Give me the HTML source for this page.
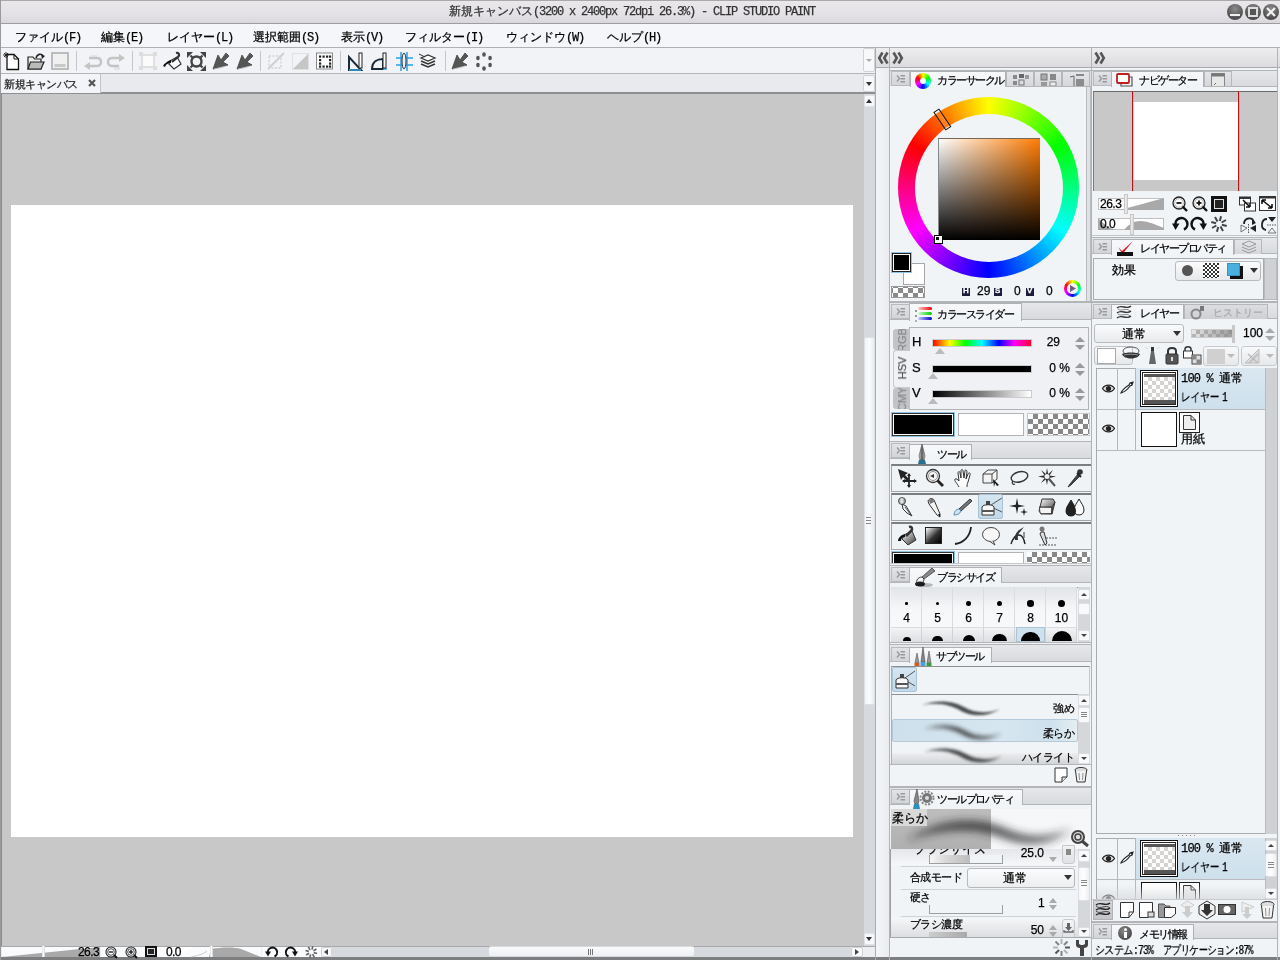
<!DOCTYPE html>
<html><head><meta charset="utf-8">
<style>
*{box-sizing:border-box}
html,body{margin:0;padding:0;width:1280px;height:960px;overflow:hidden;background:#f0f4f7;font-family:"Liberation Sans",sans-serif;font-size:12px;color:#000}
.a{position:absolute}
.m{font-family:"Liberation Mono",monospace;letter-spacing:-1.2px}
.t{white-space:nowrap;line-height:14px;will-change:transform;-webkit-text-stroke:0.25px currentColor}
svg{position:absolute;overflow:visible}
</style></head><body>
<div class="a" style="left:0px;top:0px;width:1280px;height:24px;background:linear-gradient(#e9e7ea,#e4e2e6 60%,#d9d7db);border-top:1px solid #a9a8ab;border-bottom:1px solid #9d9d9f"></div>
<div class="a t" style="left:449px;top:4px;color:#333">新規キャンバス<span class="m">(3200 x 2400px 72dpi 26.3%) - CLIP STUDIO PAINT</span></div>
<div class="a" style="left:1227px;top:4px;width:16px;height:16px;border-radius:50%;background:radial-gradient(circle at 50% 30%,#8c8c8c,#4a4a4a 75%,#555)"></div>
<div class="a" style="left:1245px;top:4px;width:16px;height:16px;border-radius:50%;background:radial-gradient(circle at 50% 30%,#8c8c8c,#4a4a4a 75%,#555)"></div>
<div class="a" style="left:1263px;top:4px;width:16px;height:16px;border-radius:50%;background:radial-gradient(circle at 50% 30%,#8c8c8c,#4a4a4a 75%,#555)"></div>
<div class="a" style="left:1230px;top:14px;width:10px;height:2px;background:#eee"></div>
<div class="a" style="left:1248px;top:7px;width:10px;height:10px;border:2px solid #ddd;background:#555"></div>
<svg style="left:1266px;top:7px;" width="10" height="10" viewBox="0 0 10 10"><path d="M1 1 L9 9 M9 1 L1 9" stroke="#f2f2f2" stroke-width="2.2"/></svg>
<div class="a" style="left:0px;top:24px;width:1280px;height:24px;background:#f4f6f9;border-bottom:1px solid #aeb0b3"></div>
<div class="a t" style="left:15px;top:30px;">ファイル<span class="m">(F)</span></div>
<div class="a t" style="left:101px;top:30px;">編集<span class="m">(E)</span></div>
<div class="a t" style="left:167px;top:30px;">レイヤー<span class="m">(L)</span></div>
<div class="a t" style="left:253px;top:30px;">選択範囲<span class="m">(S)</span></div>
<div class="a t" style="left:341px;top:30px;">表示<span class="m">(V)</span></div>
<div class="a t" style="left:405px;top:30px;">フィルター<span class="m">(I)</span></div>
<div class="a t" style="left:506px;top:30px;">ウィンドウ<span class="m">(W)</span></div>
<div class="a t" style="left:607px;top:30px;">ヘルプ<span class="m">(H)</span></div>
<div class="a" style="left:0px;top:48px;width:876px;height:26px;background:#f1f3f6;border-bottom:1px solid #b4b6b9"></div>
<div class="a" style="left:863px;top:48px;width:12px;height:24px;background:#f7f8fa;border:1px solid #d0d2d5;border-radius:2px"></div>
<div class="a" style="left:866px;top:59px;width:0;height:0;border-left:3.0px solid transparent;border-right:3.0px solid transparent;border-top:3px solid #aaa"></div>
<div class="a" style="left:76px;top:51px;width:1px;height:20px;background:#c4c6c9"></div>
<div class="a" style="left:132px;top:51px;width:1px;height:20px;background:#c4c6c9"></div>
<div class="a" style="left:260px;top:51px;width:1px;height:20px;background:#c4c6c9"></div>
<div class="a" style="left:340px;top:51px;width:1px;height:20px;background:#c4c6c9"></div>
<div class="a" style="left:445px;top:51px;width:1px;height:20px;background:#c4c6c9"></div>
<svg style="left:3px;top:52px;" width="17" height="19" viewBox="0 0 17 19"><path d="M4 2.5 L11 2.5 L15.5 7 L15.5 17.5 L4 17.5Z" fill="#fff" stroke="#111" stroke-width="1.3"/><path d="M11 2.5 L11 7 L15.5 7" fill="none" stroke="#111" stroke-width="1"/><path d="M3 0 L3 6 M0 3 L6 3 M1 1 L5 5 M5 1 L1 5" stroke="#222" stroke-width="0.9"/></svg>
<svg style="left:27px;top:53px;" width="19" height="17" viewBox="0 0 19 17"><path d="M1 4 L6 4 L7.5 6 L14 6 L14 16 L1 16Z" fill="#eee" stroke="#222" stroke-width="1.2"/><path d="M1 16 L3.5 9 L17 9 L14 16Z" fill="#bbb" stroke="#222" stroke-width="1.2"/><path d="M9 5 C10 1 14 0 16 3" fill="none" stroke="#222" stroke-width="1.6"/><path d="M14 1 L18 3 L15 6Z" fill="#222"/></svg>
<svg style="left:51px;top:52px;" width="18" height="18" viewBox="0 0 18 18"><rect x="1" y="1" width="16" height="16" fill="#f0f0f0" stroke="#bcbcbc" stroke-width="2"/><rect x="3.5" y="12" width="11" height="3" fill="#c8c8c8"/></svg>
<svg style="left:83px;top:54px;" width="19" height="14" viewBox="0 0 19 14"><path d="M6 4 L14 4 C17 4 18 6 18 8 C18 10 17 12 14 12 L7 12" fill="none" stroke="#c4c4c4" stroke-width="2.4"/><path d="M1 12 L7 8 L7 16Z" fill="#c4c4c4"/><path d="M9 1 L9 3 M11 1 L11 3 M13 1 L13 3" stroke="#d4d4d4"/></svg>
<svg style="left:107px;top:54px;" width="19" height="14" viewBox="0 0 19 14"><path d="M13 4 L5 4 C2 4 1 6 1 8 C1 10 2 12 5 12 L12 12" fill="none" stroke="#c4c4c4" stroke-width="2.4"/><path d="M18 4 L12 0 L12 8Z" fill="#c4c4c4"/><path d="M8 13 L8 16 M10 13 L10 16 M12 13 L12 16" stroke="#d4d4d4"/></svg>
<svg style="left:139px;top:52px;" width="18" height="18" viewBox="0 0 18 18"><rect x="3" y="3" width="12" height="12" fill="#fbfbfb" stroke="#d8d8d8" stroke-width="1.5"/><rect x="0" y="0" width="4" height="4" fill="#ddd"/><rect x="14" y="0" width="4" height="4" fill="#ddd"/><rect x="0" y="14" width="4" height="4" fill="#ddd"/><rect x="14" y="14" width="4" height="4" fill="#ddd"/></svg>
<svg style="left:163px;top:52px;" width="19" height="18" viewBox="0 0 19 18"><path d="M7 9 L14 5 L18 12 L11 17 L6 12Z" fill="#fff" stroke="#333" stroke-width="1.2"/><path d="M13 1 C16 0 17 3 15 5 L9 10" stroke="#333" stroke-width="2.2" fill="none"/><path d="M8 8 C4 9 1 12 0 14 L2 15 C3 12 5 11 8 11Z" fill="#111"/></svg>
<svg style="left:187px;top:52px;" width="19" height="19" viewBox="0 0 19 19"><path d="M3.5 3.5 L15.5 15.5 M15.5 3.5 L3.5 15.5" stroke="#444" stroke-width="2.2"/><circle cx="9.5" cy="9.5" r="5" fill="#f1f3f6" stroke="#444" stroke-width="2.4"/><path d="M0 0 L6 0 L0 6Z M19 0 L13 0 L19 6Z M0 19 L6 19 L0 13Z M19 19 L13 19 L19 13Z" fill="#444"/></svg>
<svg style="left:212px;top:52px;" width="17" height="18" viewBox="0 0 17 18"><path d="M1 17 L6 3 L9 8 L14 1 L17 4 L11 10 L16 13Z" fill="#555" stroke="#444" stroke-width="0.8"/><path d="M2 17 C7 16 11 15 14 14" stroke="#bbb" stroke-width="1" fill="none"/></svg>
<svg style="left:236px;top:52px;" width="17" height="18" viewBox="0 0 17 18"><path d="M1 17 L6 3 L9 8 L14 1 L17 4 L11 10 L16 13Z" fill="#555" stroke="#444" stroke-width="0.8"/><path d="M2 17 C7 16 11 15 14 14" stroke="#bbb" stroke-width="1" fill="none"/></svg>
<svg style="left:451px;top:52px;" width="17" height="18" viewBox="0 0 17 18"><path d="M1 17 L6 3 L9 8 L14 1 L17 4 L11 10 L16 13Z" fill="#555" stroke="#444" stroke-width="0.8"/><path d="M2 17 C7 16 11 15 14 14" stroke="#bbb" stroke-width="1" fill="none"/></svg>
<svg style="left:268px;top:53px;" width="16" height="17" viewBox="0 0 16 17"><rect x="1" y="3" width="12" height="12" fill="none" stroke="#d0d0d0" stroke-width="1.3" stroke-dasharray="2 1.5"/><path d="M0 16 L16 0" stroke="#cfcfcf" stroke-width="2"/></svg>
<svg style="left:292px;top:53px;" width="17" height="17" viewBox="0 0 17 17"><path d="M1 16 L16 1 L16 16Z" fill="#c6c6c6"/><rect x="0.5" y="0.5" width="16" height="16" fill="none" stroke="#e0e0e0"/></svg>
<svg style="left:316px;top:52px;" width="17" height="18" viewBox="0 0 17 18"><rect x="0.5" y="1" width="16" height="16" fill="#fff" stroke="#888"/><rect x="3" y="3.5" width="2.2" height="2.2" fill="#222"/><rect x="6.5" y="3.5" width="2.2" height="2.2" fill="#222"/><rect x="10" y="3.5" width="2.2" height="2.2" fill="#222"/><rect x="13" y="3.5" width="2.2" height="2.2" fill="#222"/><rect x="3" y="7" width="2.2" height="2.2" fill="#222"/><rect x="13" y="7" width="2.2" height="2.2" fill="#222"/><rect x="3" y="10.5" width="2.2" height="2.2" fill="#222"/><rect x="13" y="10.5" width="2.2" height="2.2" fill="#222"/><rect x="3" y="13.5" width="2.2" height="2.2" fill="#222"/><rect x="6.5" y="13.5" width="2.2" height="2.2" fill="#222"/><rect x="10" y="13.5" width="2.2" height="2.2" fill="#222"/><rect x="13" y="13.5" width="2.2" height="2.2" fill="#222"/></svg>
<svg style="left:348px;top:52px;" width="15" height="19" viewBox="0 0 15 19"><path d="M1 18 L1 5 L13 18Z" fill="none" stroke="#1a2a3a" stroke-width="2"/><path d="M1 18 L13 18" stroke="#3aa8e0" stroke-width="1.5"/><rect x="11" y="1" width="3" height="15" fill="#fff" stroke="#222"/></svg>
<svg style="left:371px;top:52px;" width="17" height="19" viewBox="0 0 17 19"><path d="M1 17 C1 10 6 7 12 7 L12 17Z" fill="none" stroke="#1a2a3a" stroke-width="2"/><path d="M12 17 L16 17" stroke="#3aa8e0" stroke-width="1.6"/><rect x="12" y="1" width="3" height="15" fill="#fff" stroke="#222"/></svg>
<svg style="left:396px;top:52px;" width="17" height="19" viewBox="0 0 17 19"><path d="M0 6 L17 6 M0 13 L17 13 M5 0 L5 19 M11 0 L11 19" stroke="#2aa0e8" stroke-width="1.5"/><ellipse cx="8" cy="9" rx="2" ry="8" fill="#eee" stroke="#333"/></svg>
<svg style="left:419px;top:53px;" width="18" height="16" viewBox="0 0 18 16"><path d="M2 5 L9 2 L16 5 L9 8Z" fill="#fff" stroke="#333" stroke-width="1.2"/><path d="M2 8 L9 11 L16 8 M2 11 L9 14 L16 11" fill="none" stroke="#333" stroke-width="1.5"/><path d="M0 1 L6 4" stroke="#333" stroke-width="1"/></svg>
<svg style="left:475px;top:52px;" width="18" height="19" viewBox="0 0 18 19"><g fill="#555"><ellipse cx="9.0" cy="2.5" rx="1.8" ry="2.2"/><ellipse cx="15.06217782649107" cy="5.999999999999999" rx="1.8" ry="2.2"/><ellipse cx="15.062177826491071" cy="12.999999999999998" rx="1.8" ry="2.2"/><ellipse cx="9.0" cy="16.5" rx="1.8" ry="2.2"/><ellipse cx="2.9378221735089314" cy="13.000000000000004" rx="1.8" ry="2.2"/><ellipse cx="2.9378221735089296" cy="5.999999999999999" rx="1.8" ry="2.2"/></g></svg>
<div class="a" style="left:0px;top:74px;width:876px;height:20px;background:#e9eaee;border-bottom:2px solid #8e8f92"></div>
<div class="a" style="left:1px;top:74px;width:100px;height:19px;background:#f2f4f7;border-right:1px solid #c2c4c7"></div>
<div class="a t" style="left:4px;top:77px;color:#222;font-size:11px;letter-spacing:-0.5px">新規キャンバス</div>
<svg style="left:88px;top:79px;" width="8" height="8" viewBox="0 0 8 8"><path d="M1 1 L7 7 M7 1 L1 7" stroke="#555" stroke-width="2.2"/></svg>
<div class="a" style="left:863px;top:75px;width:12px;height:17px;background:#f7f8fa;border:1px solid #d0d2d5;border-radius:2px"></div>
<div class="a" style="left:866px;top:82px;width:0;height:0;border-left:3.0px solid transparent;border-right:3.0px solid transparent;border-top:4px solid #333"></div>
<div class="a" style="left:0px;top:94px;width:864px;height:853px;background:#c8c8c8"></div>
<div class="a" style="left:0px;top:94px;width:2px;height:866px;background:#8c8c8c"></div>
<div class="a" style="left:11px;top:205px;width:842px;height:632px;background:#fff"></div>
<div class="a" style="left:864px;top:94px;width:11px;height:853px;background:#d6d9dd"></div>
<div class="a" style="left:864px;top:95px;width:11px;height:12px;background:#f7f8fa;border:1px solid #e0e2e5;border-radius:2px"></div>
<div class="a" style="left:866px;top:99px;width:0;height:0;border-left:3.0px solid transparent;border-right:3.0px solid transparent;border-bottom:4px solid #333"></div>
<div class="a" style="left:864px;top:337px;width:11px;height:368px;background:linear-gradient(90deg,#f1f4f7,#fbfcfd 50%,#e8ebee);border:1px solid #dfe2e5;border-radius:2px"></div>
<div class="a" style="left:866px;top:517px;width:5px;height:7px;border-top:1px solid #888;border-bottom:1px solid #888"></div>
<div class="a" style="left:866px;top:520px;width:5px;height:1px;background:#888"></div>
<div class="a" style="left:864px;top:933px;width:11px;height:12px;background:#f7f8fa;border:1px solid #e0e2e5;border-radius:2px"></div>
<div class="a" style="left:866px;top:937px;width:0;height:0;border-left:3.0px solid transparent;border-right:3.0px solid transparent;border-top:4px solid #333"></div>
<div class="a" style="left:0px;top:946px;width:876px;height:11px;background:#eceef1;border-top:1px solid #a6a8ab"></div>
<div class="a" style="left:0px;top:957px;width:1280px;height:3px;background:#7d7e80"></div>
<div class="a" style="left:2px;top:947px;width:98px;height:10px;background:#fafbfc"></div>
<svg style="left:2px;top:947px;" width="98" height="10" viewBox="0 0 98 10"><path d="M0 10 L98 0 L98 10Z" fill="#a9a9a9"/></svg>
<div class="a" style="left:42px;top:946px;width:3px;height:11px;background:linear-gradient(90deg,#ddd,#fafafa,#ccc)"></div>
<div class="a t" style="left:60px;top:945px;width:39px;text-align:right;font-size:12px;letter-spacing:-0.6px;line-height:14px">26.3</div>
<div class="a" style="left:101px;top:947px;width:60px;height:10px;background:#fafbfc"></div>
<svg style="left:105px;top:946px;" width="13" height="13" viewBox="0 0 13 13"><circle cx="6" cy="6" r="5" fill="#fff" stroke="#222" stroke-width="1.1"/><circle cx="6" cy="6" r="3.3" fill="none" stroke="#222" stroke-width="0.8"/><path d="M9 9 L12 12" stroke="#111" stroke-width="2"/><path d="M4 6 L8 6" stroke="#111" stroke-width="1.3"/></svg>
<svg style="left:125px;top:946px;" width="13" height="13" viewBox="0 0 13 13"><circle cx="6" cy="6" r="5" fill="#fff" stroke="#222" stroke-width="1.1"/><circle cx="6" cy="6" r="3.3" fill="none" stroke="#222" stroke-width="0.8"/><path d="M9 9 L12 12" stroke="#111" stroke-width="2"/><path d="M4 6 L8 6" stroke="#111" stroke-width="1.3"/><path d="M6 4 L6 8" stroke="#111" stroke-width="1.3"/></svg>
<div class="a" style="left:145px;top:946px;width:12px;height:11px;background:#222;border:2px solid #111"></div>
<div class="a" style="left:147px;top:948px;width:8px;height:7px;border:1px solid #ddd"></div>
<div class="a" style="left:161px;top:947px;width:100px;height:10px;background:#fafbfc;border-left:1px solid #ccc"></div>
<svg style="left:161px;top:947px;" width="100" height="10" viewBox="0 0 100 10"><path d="M0 10 C10 10 20 6 32 0 L0 0Z" fill="#fff"/><path d="M48 10 L50 2 C60 0 75 0 80 2 L100 10Z" fill="#a9a9a9"/><path d="M30 10 C40 8 44 6 46 4" stroke="#ccc" fill="none"/></svg>
<div class="a" style="left:210px;top:946px;width:3px;height:11px;background:linear-gradient(90deg,#ddd,#fafafa,#ccc)"></div>
<div class="a t" style="left:166px;top:945px;font-size:12px;letter-spacing:-0.6px">0.0</div>
<div class="a" style="left:262px;top:947px;width:60px;height:10px;background:#fafbfc"></div>
<svg style="left:265px;top:946px;" width="13" height="12" viewBox="0 0 13 12"><path d="M2.8 7 A4.7 4.7 0 1 1 9.5 10.5" fill="none" stroke="#111" stroke-width="2"/><path d="M0 5.5 L6 5.5 L3 10.5Z" fill="#111"/></svg>
<svg style="left:285px;top:946px;" width="13" height="12" viewBox="0 0 13 12"><path d="M10.2 7 A4.7 4.7 0 1 0 3.5 10.5" fill="none" stroke="#111" stroke-width="2"/><path d="M13 5.5 L7 5.5 L10 10.5Z" fill="#111"/></svg>
<svg style="left:305px;top:946px;" width="13" height="12" viewBox="0 0 13 12"><g fill="#666"><rect x="5.5" y="0" width="1.6" height="3.5" transform="rotate(15 6.3 6)"/><rect x="5.5" y="0" width="1.6" height="3.5" transform="rotate(60 6.3 6)"/><rect x="5.5" y="0" width="1.6" height="3.5" transform="rotate(105 6.3 6)"/><rect x="5.5" y="0" width="1.6" height="3.5" transform="rotate(150 6.3 6)"/><rect x="5.5" y="0" width="1.6" height="3.5" transform="rotate(195 6.3 6)"/><rect x="5.5" y="0" width="1.6" height="3.5" transform="rotate(240 6.3 6)"/><rect x="5.5" y="0" width="1.6" height="3.5" transform="rotate(285 6.3 6)"/><rect x="5.5" y="0" width="1.6" height="3.5" transform="rotate(330 6.3 6)"/></g></svg>
<div class="a" style="left:321px;top:947px;width:11px;height:10px;background:#f8f9fa;border:1px solid #d0d2d5;border-radius:2px"></div>
<svg style="left:324px;top:949px;" width="5" height="6" viewBox="0 0 5 6"><path d="M4 0 L0 3 L4 6Z" fill="#444"/></svg>
<div class="a" style="left:332px;top:947px;width:519px;height:10px;background:#d6d9dd"></div>
<div class="a" style="left:488px;top:946px;width:207px;height:11px;background:linear-gradient(#fafbfc,#eef0f3);border:1px solid #d8dadd;border-radius:3px"></div>
<div class="a" style="left:588px;top:949px;width:1px;height:6px;background:#777"></div>
<div class="a" style="left:590px;top:949px;width:1px;height:6px;background:#777"></div>
<div class="a" style="left:592px;top:949px;width:1px;height:6px;background:#777"></div>
<div class="a" style="left:851px;top:947px;width:12px;height:10px;background:#f8f9fa;border:1px solid #d0d2d5;border-radius:2px"></div>
<svg style="left:855px;top:949px;" width="5" height="6" viewBox="0 0 5 6"><path d="M0 0 L4 3 L0 6Z" fill="#444"/></svg>
<div class="a" style="left:863px;top:947px;width:13px;height:10px;background:#eceef1"></div>
<div class="a" style="left:875px;top:48px;width:405px;height:20px;background:linear-gradient(#ededef,#e3e3e5 60%,#dcdcde);border-bottom:1px solid #a9aaad"></div>
<div class="a" style="left:875px;top:47px;width:1px;height:913px;background:#a9abae"></div>
<div class="a" style="left:876px;top:68px;width:13px;height:889px;background:linear-gradient(90deg,#f4f5f8,#e9ebef)"></div>
<div class="a" style="left:889px;top:47px;width:1px;height:913px;background:#b1b3b6"></div>
<div class="a" style="left:1091px;top:47px;width:1px;height:913px;background:#b1b3b6"></div>
<div class="a" style="left:1277px;top:47px;width:1px;height:913px;background:#b1b3b6"></div>
<svg style="left:878px;top:52px;" width="11" height="12" viewBox="0 0 11 12"><path d="M4.5 0.5 L1.2 6 L4.5 11.5 M9.5 0.5 L6.2 6 L9.5 11.5" fill="none" stroke="#555" stroke-width="2.6"/></svg>
<svg style="left:892px;top:52px;" width="11" height="12" viewBox="0 0 11 12"><path d="M1.5 0.5 L4.8 6 L1.5 11.5 M6.5 0.5 L9.8 6 L6.5 11.5" fill="none" stroke="#555" stroke-width="2.6"/></svg>
<svg style="left:1094px;top:52px;" width="11" height="12" viewBox="0 0 11 12"><path d="M1.5 0.5 L4.8 6 L1.5 11.5 M6.5 0.5 L9.8 6 L6.5 11.5" fill="none" stroke="#555" stroke-width="2.6"/></svg>
<div class="a" style="left:890px;top:68px;width:201px;height:889px;background:#f0f4f7"></div>
<div class="a" style="left:890px;top:70px;width:201px;height:16px;background:linear-gradient(#e6e7ea,#d9dade);border-top:1px solid #b2b3b6"></div>
<div class="a" style="left:891px;top:71px;width:19px;height:15px;background:linear-gradient(#e2e3e6,#d3d4d8);border:1px solid #b9babd"></div>
<svg style="left:897px;top:74px;" width="9" height="9" viewBox="0 0 9 9"><path d="M0 1.5 L2.5 4.5 L0 7.5" fill="none" stroke="#9a9a9d" stroke-width="1.4"/><rect x="3.5" y="1" width="4.5" height="1.5" fill="#9a9a9d"/><rect x="3.5" y="4" width="4.5" height="1.5" fill="#9a9a9d"/><rect x="3.5" y="7" width="4.5" height="1.5" fill="#9a9a9d"/></svg>
<div class="a" style="left:910px;top:71px;width:96px;height:16px;background:linear-gradient(#f7f8fa,#f0f4f7);border:1px solid #b0b1b4;border-bottom:none"></div>
<div class="a" style="left:915px;top:73px;width:16px;height:16px;border-radius:50%;background:conic-gradient(from 0deg,#ff0,#0f0 60deg,#0ff 120deg,#00f 180deg,#f0f 240deg,#f00 300deg,#ff0 360deg)"></div>
<div class="a" style="left:920px;top:78px;width:6px;height:6px;border-radius:50%;background:#fff"></div>
<div class="a t" style="left:937px;top:73px;font-size:11px;color:#000;letter-spacing:-1.5px">カラーサークル</div>
<div class="a" style="left:1006px;top:71px;width:28px;height:15px;background:linear-gradient(#e4e5e8,#d6d7db);border:1px solid #b6b7ba;border-bottom:none"></div>
<div class="a" style="left:1034px;top:71px;width:28px;height:15px;background:linear-gradient(#e4e5e8,#d6d7db);border:1px solid #b6b7ba;border-bottom:none"></div>
<div class="a" style="left:1062px;top:71px;width:28px;height:15px;background:linear-gradient(#e4e5e8,#d6d7db);border:1px solid #b6b7ba;border-bottom:none"></div>
<svg style="left:1013px;top:74px;" width="16" height="12" viewBox="0 0 16 12"><rect x="0" y="1" width="4" height="4" fill="#888"/><rect x="6" y="0" width="5" height="4" fill="#666"/><rect x="12" y="1" width="4" height="4" fill="#999"/><rect x="0" y="7" width="4" height="4" fill="#888"/><rect x="6" y="6" width="5" height="5" fill="none" stroke="#777"/></svg>
<svg style="left:1041px;top:74px;" width="16" height="12" viewBox="0 0 16 12"><rect x="0" y="0" width="6" height="6" fill="#aaa" stroke="#777"/><rect x="9" y="0" width="6" height="6" fill="#888"/><rect x="0" y="8" width="6" height="4" fill="#999"/><rect x="9" y="8" width="6" height="4" fill="#eee" stroke="#888"/></svg>
<svg style="left:1068px;top:73px;" width="16" height="13" viewBox="0 0 16 13"><path d="M2 4 L6 3 L6 13" stroke="#666" fill="none"/><rect x="8" y="1" width="8" height="2" fill="#888"/><rect x="8" y="6" width="8" height="7" fill="#8c8c8c"/></svg>
<div class="a" style="left:890px;top:86px;width:201px;height:1px;background:#b4b5b8;left:1006px;width:85px"></div>
<div class="a" style="left:1086px;top:87px;width:1px;height:214px;background:#b8babd"></div>
<div class="a" style="left:1087px;top:87px;width:3px;height:214px;background:#dfe1e4"></div>
<div class="a" style="left:1090px;top:87px;width:1px;height:214px;background:#b8babd"></div>
<div class="a" style="left:898px;top:97px;width:181px;height:181px;border-radius:50%;background:conic-gradient(from 0deg,#ff0,#0f0 60deg,#0ff 120deg,#00f 180deg,#f0f 240deg,#f00 300deg,#ff0 360deg)"></div>
<div class="a" style="left:914.5px;top:113.5px;width:148px;height:148px;border-radius:50%;background:#f0f4f7"></div>
<div class="a" style="left:938px;top:138px;width:102px;height:102px;background:linear-gradient(to top,#000,rgba(0,0,0,0)),linear-gradient(to right,#fff,rgb(255,123,0));border-top:1px solid #776655;border-left:1px solid #888"></div>
<div class="a" style="left:934px;top:235px;width:9px;height:9px;background:#fff;border:1px solid #000"></div>
<div class="a" style="left:936px;top:237px;width:3px;height:3px;background:#111"></div>
<svg style="left:922px;top:100px" width="40" height="40" viewBox="0 0 40 40"><rect x="17.4" y="9" width="6" height="21" fill="rgba(255,255,255,0.12)" stroke="#111" stroke-width="1" transform="rotate(-34 20.4 19.6)"/></svg>
<div class="a" style="left:903px;top:263px;width:22px;height:22px;background:#fff;border:1px solid #a4a6a9"></div>
<div class="a" style="left:891px;top:252px;width:21px;height:21px;background:#8fc3e0"></div>
<div class="a" style="left:893px;top:254px;width:17px;height:17px;background:#000;border:1px solid #fff;outline:1px solid #222"></div>
<div class="a" style="left:891px;top:286px;width:34px;height:12px;background:conic-gradient(#8a8a8a 90deg,#fff 90deg 180deg,#8a8a8a 180deg 270deg,#fff 270deg) 1px 1px/10px 10px;border:1px solid #999"></div>
<div class="a" style="left:962px;top:288px;width:8px;height:8px;background:#1c1c3a"></div>
<div class="a t" style="left:963px;top:285px;color:#fff;font-size:8px;font-weight:bold;line-height:12px">H</div>
<div class="a" style="left:994px;top:288px;width:8px;height:8px;background:#1c1c3a"></div>
<div class="a t" style="left:995px;top:285px;color:#fff;font-size:8px;font-weight:bold;line-height:12px">S</div>
<div class="a" style="left:1026px;top:288px;width:8px;height:8px;background:#1c1c3a"></div>
<div class="a t" style="left:1027px;top:285px;color:#fff;font-size:8px;font-weight:bold;line-height:12px">V</div>
<div class="a t" style="left:977px;top:284px;font-size:12px;line-height:14px">29</div>
<div class="a t" style="left:1014px;top:284px;font-size:12px;line-height:14px">0</div>
<div class="a t" style="left:1046px;top:284px;font-size:12px;line-height:14px">0</div>
<div class="a" style="left:1064px;top:280px;width:17px;height:17px;border-radius:50%;background:conic-gradient(from 0deg,#ff0,#0f0 60deg,#0ff 120deg,#00f 180deg,#f0f 240deg,#f00 300deg,#ff0 360deg)"></div>
<div class="a" style="left:1067px;top:283px;width:11px;height:11px;border-radius:50%;background:#f4f4f4"></div>
<svg style="left:1069px;top:285px;" width="7" height="7" viewBox="0 0 7 7"><path d="M1 0 L7 3.5 L1 7Z" fill="#7a5a7a"/></svg>
<div class="a" style="left:890px;top:301px;width:201px;height:1px;background:#b4b5b8"></div>
<div class="a" style="left:890px;top:303px;width:201px;height:1px;background:#c8c9cc"></div>
<div class="a" style="left:890px;top:302px;width:201px;height:18px;background:linear-gradient(#e6e7ea,#d9dade);border-top:1px solid #b2b3b6;border-bottom:1px solid #b4b5b8"></div>
<div class="a" style="left:891px;top:304px;width:19px;height:15px;background:linear-gradient(#e2e3e6,#d3d4d8);border:1px solid #b9babd"></div>
<svg style="left:897px;top:307px;" width="9" height="9" viewBox="0 0 9 9"><path d="M0 1.5 L2.5 4.5 L0 7.5" fill="none" stroke="#9a9a9d" stroke-width="1.4"/><rect x="3.5" y="1" width="4.5" height="1.5" fill="#9a9a9d"/><rect x="3.5" y="4" width="4.5" height="1.5" fill="#9a9a9d"/><rect x="3.5" y="7" width="4.5" height="1.5" fill="#9a9a9d"/></svg>
<div class="a" style="left:909px;top:303px;width:113px;height:18px;background:linear-gradient(#f7f8fa,#f0f4f7);border:1px solid #b0b1b4;border-bottom:none"></div>
<svg style="left:914px;top:306px;" width="18" height="17" viewBox="0 0 18 17"><defs><linearGradient id="gr" x1="0" x2="1"><stop offset="0" stop-color="#fcc"/><stop offset="1" stop-color="#e00"/></linearGradient><linearGradient id="gg" x1="0" x2="1"><stop offset="0" stop-color="#cfc"/><stop offset="1" stop-color="#0c0"/></linearGradient><linearGradient id="gb" x1="0" x2="1"><stop offset="0" stop-color="#ccf"/><stop offset="1" stop-color="#00c"/></linearGradient></defs><rect x="4" y="1" width="14" height="3" rx="1.5" fill="url(#gr)"/><rect x="4" y="6" width="14" height="3" rx="1.5" fill="url(#gg)"/><rect x="4" y="11" width="14" height="3" rx="1.5" fill="url(#gb)"/><circle cx="2" cy="5" r="1" fill="#777"/><circle cx="2" cy="10" r="1" fill="#777"/><circle cx="2" cy="15" r="1" fill="#99a"/></svg>
<div class="a t" style="left:937px;top:307px;font-size:11px;color:#000;letter-spacing:-1.5px">カラースライダー</div>
<div class="a" style="left:909px;top:327px;width:180px;height:83px;background:#f0f1f4;border:1px solid #b2b3b6"></div>
<div class="a" style="left:893px;top:329px;width:17px;height:21px;background:#c2c3c6;border-radius:3px 0 0 3px"></div>
<div class="a" style="left:893px;top:350px;width:17px;height:38px;background:#f0f1f4;border:1px solid #c8c9cc;border-right:none;border-radius:3px 0 0 3px"></div>
<div class="a" style="left:893px;top:388px;width:17px;height:21px;background:#c2c3c6;border-radius:3px 0 0 3px"></div>
<div class="a" style="left:893px;top:329px;width:17px;height:21px;overflow:hidden"><div class="a t" style="left:8.5px;top:10.5px;transform:translate(-50%,-50%) rotate(-90deg);font-size:11px;color:#8a8a8a">RGB</div></div>
<div class="a t" style="left:901.5px;top:368px;transform:translate(-50%,-50%) rotate(-90deg);font-size:11px;color:#555">HSV</div>
<div class="a" style="left:893px;top:388px;width:17px;height:21px;overflow:hidden"><div class="a t" style="left:8.5px;top:10.5px;transform:translate(-50%,-50%) rotate(-90deg);font-size:11px;color:#8a8a8a">CMY</div></div>
<div class="a t" style="left:912px;top:335px;font-size:13px">H</div>
<div class="a" style="left:932px;top:339px;width:100px;height:8px;background:linear-gradient(90deg,#f00,#ff0 17%,#0f0 33%,#0ff 50%,#00f 67%,#f0f 83%,#f03);border:1px solid #ccc"></div>
<div class="a t" style="left:990px;top:335px;width:70px;text-align:right;font-size:12px">29</div>
<div class="a" style="left:1075px;top:337px;width:0;height:0;border-left:5.0px solid transparent;border-right:5.0px solid transparent;border-bottom:5px solid #999"></div>
<div class="a" style="left:1075px;top:345px;width:0;height:0;border-left:5.0px solid transparent;border-right:5.0px solid transparent;border-top:5px solid #999"></div>
<div class="a t" style="left:912px;top:361px;font-size:13px">S</div>
<div class="a" style="left:932px;top:365px;width:100px;height:8px;background:#000;border:1px solid #ccc"></div>
<div class="a t" style="left:1000px;top:361px;width:70px;text-align:right;font-size:12px">0 %</div>
<div class="a" style="left:1075px;top:363px;width:0;height:0;border-left:5.0px solid transparent;border-right:5.0px solid transparent;border-bottom:5px solid #999"></div>
<div class="a" style="left:1075px;top:371px;width:0;height:0;border-left:5.0px solid transparent;border-right:5.0px solid transparent;border-top:5px solid #999"></div>
<div class="a t" style="left:912px;top:386px;font-size:13px">V</div>
<div class="a" style="left:932px;top:390px;width:100px;height:8px;background:linear-gradient(90deg,#000,#fff);border:1px solid #ccc"></div>
<div class="a t" style="left:1000px;top:386px;width:70px;text-align:right;font-size:12px">0 %</div>
<div class="a" style="left:1075px;top:388px;width:0;height:0;border-left:5.0px solid transparent;border-right:5.0px solid transparent;border-bottom:5px solid #999"></div>
<div class="a" style="left:1075px;top:396px;width:0;height:0;border-left:5.0px solid transparent;border-right:5.0px solid transparent;border-top:5px solid #999"></div>
<div class="a" style="left:935px;top:348px;width:0;height:0;border-left:5.0px solid transparent;border-right:5.0px solid transparent;border-bottom:6px solid #bbb"></div>
<div class="a" style="left:928px;top:373px;width:0;height:0;border-left:5.0px solid transparent;border-right:5.0px solid transparent;border-bottom:6px solid #bbb"></div>
<div class="a" style="left:928px;top:398px;width:0;height:0;border-left:5.0px solid transparent;border-right:5.0px solid transparent;border-bottom:6px solid #bbb"></div>
<div class="a" style="left:891px;top:412px;width:64px;height:25px;background:#8fc3e0"></div>
<div class="a" style="left:893px;top:414px;width:60px;height:21px;background:#000;border:1px solid #fff;outline:1px solid #333"></div>
<div class="a" style="left:958px;top:413px;width:66px;height:23px;background:#fff;border:1px solid #b2b3b6"></div>
<div class="a" style="left:1027px;top:413px;width:63px;height:23px;background-color:#fff;background-image:linear-gradient(45deg,#888 25%,transparent 25%,transparent 75%,#888 75%),linear-gradient(45deg,#888 25%,transparent 25%,transparent 75%,#888 75%);background-size:10px 10px;background-position:0 0,5px 5px;border:1px solid #c8c8c8"></div>
<div class="a" style="left:890px;top:441px;width:201px;height:18px;background:linear-gradient(#e6e7ea,#d9dade);border-top:1px solid #b2b3b6;border-bottom:1px solid #b4b5b8"></div>
<div class="a" style="left:891px;top:443px;width:19px;height:15px;background:linear-gradient(#e2e3e6,#d3d4d8);border:1px solid #b9babd"></div>
<svg style="left:897px;top:446px;" width="9" height="9" viewBox="0 0 9 9"><path d="M0 1.5 L2.5 4.5 L0 7.5" fill="none" stroke="#9a9a9d" stroke-width="1.4"/><rect x="3.5" y="1" width="4.5" height="1.5" fill="#9a9a9d"/><rect x="3.5" y="4" width="4.5" height="1.5" fill="#9a9a9d"/><rect x="3.5" y="7" width="4.5" height="1.5" fill="#9a9a9d"/></svg>
<div class="a" style="left:909px;top:444px;width:63px;height:16px;background:linear-gradient(#f7f8fa,#f0f4f7);border:1px solid #b0b1b4;border-bottom:none"></div>
<svg style="left:917px;top:444px;" width="10" height="20" viewBox="0 0 10 20"><defs><linearGradient id="pn" x1="0" x2="1"><stop offset="0" stop-color="#ddd"/><stop offset="0.5" stop-color="#555"/><stop offset="1" stop-color="#ccc"/></linearGradient></defs><path d="M5 0 L8 12 L7 16 L3 16 L2 12Z" fill="url(#pn)" stroke="#444" stroke-width="0.6"/><path d="M2 16 L8 16 L9 20 L1 20Z" fill="#2a6f8f"/></svg>
<div class="a t" style="left:937px;top:447px;font-size:11px;color:#000;letter-spacing:-1.5px">ツール</div>
<div class="a" style="left:891px;top:464px;width:200px;height:28px;background:#f0f3f6;border-top:2px solid #7c7d80;border-bottom:1px solid #a4a5a8;border-left:1px solid #a4a5a8"></div>
<div class="a" style="left:891px;top:493px;width:200px;height:28px;background:#f0f3f6;border-top:2px solid #7c7d80;border-bottom:1px solid #a4a5a8;border-left:1px solid #a4a5a8"></div>
<div class="a" style="left:891px;top:522px;width:200px;height:28px;background:#f0f3f6;border-top:2px solid #7c7d80;border-bottom:1px solid #a4a5a8;border-left:1px solid #a4a5a8"></div>
<div class="a" style="left:978px;top:494px;width:25px;height:25px;background:linear-gradient(#d6e6f2,#c3d8e8);border:1px solid #a9c3d6;border-radius:2px"></div>
<svg style="left:0;top:0" width="0" height="0"><defs><linearGradient id="gm" x1="0" y1="0" x2="1" y2="1"><stop offset="0" stop-color="#fff"/><stop offset="1" stop-color="#333"/></linearGradient><linearGradient id="gh" x1="0" x2="1"><stop offset="0" stop-color="#999"/><stop offset="0.5" stop-color="#eee"/><stop offset="1" stop-color="#777"/></linearGradient></defs></svg>
<svg style="left:897px;top:468px;" width="20" height="20" viewBox="0 0 20 20"><path d="M1 1 L11 5 L8 7 L12 11 L10 13 L6 9 L4 12Z" fill="#222"/><path d="M12 6 L12 19 M6 13 L19 13" stroke="#222" stroke-width="1.8"/><path d="M12 5 L10 8 L14 8Z M12 20 L10 17 L14 17Z M5 13 L8 11 L8 15Z M20 13 L17 11 L17 15Z" fill="#222"/></svg>
<svg style="left:925px;top:468px;" width="20" height="20" viewBox="0 0 20 20"><circle cx="8" cy="8" r="6.5" fill="#f6f6f6" stroke="#333" stroke-width="1.3"/><circle cx="8" cy="8" r="4.5" fill="none" stroke="#777" stroke-width="0.8"/><path d="M12.5 12.5 L18 18" stroke="#222" stroke-width="2.8"/><path d="M5 8 L9 6 L9 10Z" fill="#333"/></svg>
<svg style="left:953px;top:468px;" width="20" height="20" viewBox="0 0 20 20"><path d="M6 19 C4 15 1 13 2 11 C3 10 5 12 6 13 L5 5 C5 3 7 3 7 5 L8 10 L8 3 C8 1 10 1 10 3 L11 10 L12 3 C12 1 14 2 14 4 L13 11 L15 6 C16 4 18 5 17 7 L15 14 C14 16 14 18 14 19" fill="#fafafa" stroke="#333" stroke-width="1"/></svg>
<svg style="left:981px;top:468px;" width="20" height="20" viewBox="0 0 20 20"><path d="M2 6 L7 2 L16 2 L16 11 L11 15 L2 15Z M2 6 L11 6 L16 2 M11 6 L11 15" fill="#f4f4f4" stroke="#444" stroke-width="1"/><path d="M12 11 L18 17 L16 18 L14 15 L13 19Z" fill="#111"/></svg>
<svg style="left:1009px;top:468px;" width="20" height="20" viewBox="0 0 20 20"><ellipse cx="10.5" cy="9" rx="8.5" ry="5" fill="none" stroke="#333" stroke-width="1.4" transform="rotate(-15 10 9)"/><path d="M4 13 C2 15 4 17 6 16" fill="none" stroke="#333" stroke-width="1.2"/></svg>
<svg style="left:1037px;top:468px;" width="20" height="20" viewBox="0 0 20 20"><path d="M10 0 L11.2 6 L16 2 L12.5 7.5 L19 8.5 L12.5 10 L16 15 L11 11.5 L10 17 L8.8 11.5 L4 15 L7.5 10 L1 8.5 L7.5 7.3 L4 2 L9 6Z" fill="#333"/><circle cx="10" cy="8.5" r="2.5" fill="#eee"/><path d="M12 11 L18 18" stroke="#555" stroke-width="2"/></svg>
<svg style="left:1065px;top:468px;" width="20" height="20" viewBox="0 0 20 20"><circle cx="15" cy="4" r="2.8" fill="#333"/><path d="M13 6 L5 16 L3 19 L6 17 L15 8Z" fill="#444" stroke="#222" stroke-width="0.8"/><path d="M12 5 L16 9" stroke="#222" stroke-width="2"/></svg>
<svg style="left:897px;top:497px;" width="20" height="20" viewBox="0 0 20 20"><circle cx="5" cy="4" r="3.5" fill="url(#gh)" stroke="#444" stroke-width="0.9"/><path d="M5 7 L9 9 L12 14 L15 19 L10 16 L6 12Z" fill="#f2f2f2" stroke="#333" stroke-width="1"/><path d="M8 10 L14 18" stroke="#333" stroke-width="0.8"/></svg>
<svg style="left:925px;top:497px;" width="20" height="20" viewBox="0 0 20 20"><path d="M3 4 C4 1 8 1 9 3 L15 17 L15 20 L12 18 L4 7Z" fill="#f4f4f4" stroke="#333" stroke-width="1"/><path d="M4 3 L8 1 L9 5 L5 7Z" fill="#777"/><path d="M13 17 L15 20 L15 17Z" fill="#111"/></svg>
<svg style="left:953px;top:497px;" width="20" height="20" viewBox="0 0 20 20"><path d="M17 2 L19 4 L8 14 L6 12Z" fill="#777" stroke="#333" stroke-width="1"/><path d="M6 12 L8 14 C7 17 4 18 1 18 C1 15 3 12 6 12Z" fill="#cfe2f0" stroke="#5d8fb3" stroke-width="1"/></svg>
<svg style="left:980px;top:497px;" width="20" height="20" viewBox="0 0 20 20"><path d="M11 8 L22 1 M11 10 L22 15" stroke="#555" stroke-width="1" fill="none"/><rect x="6" y="4" width="4" height="5" fill="#444"/><path d="M2 10 C3 7 13 7 14 10 L14 18 L2 18Z" fill="#f8f8f8" stroke="#333" stroke-width="1"/><rect x="2" y="13" width="12" height="2" fill="#555"/></svg>
<svg style="left:1009px;top:497px;" width="20" height="20" viewBox="0 0 20 20"><path d="M8 1 L9.3 7.7 L16 9 L9.3 10.3 L8 17 L6.7 10.3 L0 9 L6.7 7.7Z" fill="#222"/><path d="M15 11 L15.8 14.2 L19 15 L15.8 15.8 L15 19 L14.2 15.8 L11 15 L14.2 14.2Z" fill="#222"/></svg>
<svg style="left:1037px;top:497px;" width="20" height="20" viewBox="0 0 20 20"><path d="M5 2 L16 2 L18 5 L15 17 L4 17 L2 14Z" fill="url(#gm)" stroke="#333" stroke-width="1"/><path d="M2 10 L15 10 L18 5 M15 10 L15 17" fill="none" stroke="#333" stroke-width="1"/><path d="M3 11 L14 11 L14 16 L4 16Z" fill="#f4f4f4"/></svg>
<svg style="left:1065px;top:497px;" width="20" height="20" viewBox="0 0 20 20"><path d="M6 3 C8 7 11 10 11 14 C11 17 9 19 6 19 C3 19 1 17 1 14 C1 10 4 7 6 3Z" fill="url(#gm)" stroke="#222" stroke-width="1" transform="scale(-1 1) translate(-12 0)"/><path d="M14 2 C16 6 19 9 19 13 C19 16 17 18 14 18 C11 18 9 16 9 13 C9 9 12 6 14 2Z" fill="#fbfbfb" stroke="#222" stroke-width="1"/><path d="M6 3 C8 7 11 10 11 14 C11 17 9 19 6 19 C3 19 1 17 1 14 C1 10 4 7 6 3Z" fill="#222"/></svg>
<svg style="left:897px;top:526px;" width="20" height="20" viewBox="0 0 20 20"><path d="M7 9 L15 5 L19 14 L11 19 L5 13Z" fill="url(#gm)" stroke="#333" stroke-width="1"/><path d="M12 1 C15 0 16 3 14 5 L9 10" stroke="#333" stroke-width="2.5" fill="none"/><path d="M8 8 C4 9 1 12 1 15 L4 15 C4 12 6 11 8 11Z" fill="#111"/></svg>
<div class="a" style="left:925px;top:527px;width:17px;height:17px;background:linear-gradient(135deg,#fff,#333 55%,#000);border:1px solid #222"></div>
<svg style="left:953px;top:526px;" width="20" height="20" viewBox="0 0 20 20"><path d="M2 18 C10 17 17 11 18 1" fill="none" stroke="#222" stroke-width="1.8"/></svg>
<svg style="left:981px;top:526px;" width="20" height="20" viewBox="0 0 20 20"><ellipse cx="10" cy="8.5" rx="8.5" ry="7" fill="#f7f7f7" stroke="#444" stroke-width="1"/><path d="M12 15 L14 19 L9 15.5" fill="#f7f7f7" stroke="#444" stroke-width="1"/></svg>
<svg style="left:1009px;top:526px;" width="20" height="20" viewBox="0 0 20 20"><path d="M2 18 C4 12 7 9 10 9 C13 9 15 13 16 18" fill="none" stroke="#222" stroke-width="1.4"/><path d="M6 14 C5 9 8 6 10 4 L15 1 L11 6 C8 9 9 12 9 14Z" fill="#333"/><path d="M15 6 L15 12" stroke="#333" stroke-width="1"/></svg>
<svg style="left:1037px;top:526px;" width="20" height="20" viewBox="0 0 20 20"><circle cx="5" cy="3" r="2.5" fill="#777"/><path d="M4 6 L7 6 L10 17 L8 19 L3 8Z" fill="#ddd" stroke="#333" stroke-width="1"/><path d="M9 12 L20 12 M2 19 L20 19" stroke="#555" stroke-width="1" stroke-dasharray="2 1"/></svg>
<div class="a" style="left:890px;top:550px;width:201px;height:14px;overflow:hidden">
<div class="a" style="left:1px;top:1px;width:64px;height:20px;background:#8fc3e0"></div><div class="a" style="left:3px;top:3px;width:60px;height:16px;background:#000;border:1px solid #fff;outline:1px solid #333"></div><div class="a" style="left:68px;top:2px;width:66px;height:20px;background:#fff;border:1px solid #b2b3b6"></div><div class="a" style="left:137px;top:2px;width:63px;height:20px;background-color:#fff;background-image:linear-gradient(45deg,#888 25%,transparent 25%,transparent 75%,#888 75%),linear-gradient(45deg,#888 25%,transparent 25%,transparent 75%,#888 75%);background-size:10px 10px;background-position:0 0,5px 5px"></div>
</div>
<div class="a" style="left:890px;top:563px;width:201px;height:1px;background:#c4c5c8"></div>
<div class="a" style="left:890px;top:565px;width:201px;height:18px;background:linear-gradient(#e6e7ea,#d9dade);border-top:1px solid #b2b3b6;border-bottom:1px solid #b4b5b8"></div>
<div class="a" style="left:891px;top:567px;width:19px;height:15px;background:linear-gradient(#e2e3e6,#d3d4d8);border:1px solid #b9babd"></div>
<svg style="left:897px;top:570px;" width="9" height="9" viewBox="0 0 9 9"><path d="M0 1.5 L2.5 4.5 L0 7.5" fill="none" stroke="#9a9a9d" stroke-width="1.4"/><rect x="3.5" y="1" width="4.5" height="1.5" fill="#9a9a9d"/><rect x="3.5" y="4" width="4.5" height="1.5" fill="#9a9a9d"/><rect x="3.5" y="7" width="4.5" height="1.5" fill="#9a9a9d"/></svg>
<div class="a" style="left:909px;top:567px;width:93px;height:16px;background:linear-gradient(#f7f8fa,#f0f4f7);border:1px solid #b0b1b4;border-bottom:none"></div>
<svg style="left:914px;top:568px;" width="22" height="19" viewBox="0 0 22 19"><path d="M18 0 L21 3 L10 11 L8 9Z" fill="#888" stroke="#444" stroke-width="0.8"/><path d="M8 9 L10 11 C10 14 8 16 5 16 C3 16 2 14 3 12 C4 10 6 9 8 9Z" fill="#f4f4f4" stroke="#333" stroke-width="0.9"/><ellipse cx="6" cy="16" rx="5" ry="2.5" fill="#222"/><ellipse cx="11" cy="17" rx="8" ry="2" fill="rgba(0,0,0,0.25)"/></svg>
<div class="a t" style="left:937px;top:570px;font-size:11px;color:#000;letter-spacing:-1.5px">ブラシサイズ</div>
<div class="a" style="left:891px;top:587px;width:187px;height:55px;background:#f3f4f6;border-top:1px solid #999;border-left:1px solid #b0b0b0"></div>
<div class="a" style="left:891px;top:587px;width:31px;height:40px;background:linear-gradient(#e1e3e6,#f6f7f9 55%,#f8f9fb);border-right:1px solid #dadcdf"></div>
<div class="a" style="left:891px;top:627px;width:31px;height:15px;background:linear-gradient(#f2f3f5,#dcdee1);border-right:1px solid #d0d2d5;border-top:1px solid #dcdde0"></div>
<div class="a" style="left:905.2px;top:602.2px;width:2.6px;height:2.6px;border-radius:50%;background:#000"></div>
<div class="a t" style="left:891px;top:611px;width:31px;text-align:center;font-size:12px">4</div>
<div class="a" style="left:902.5px;top:637px;width:8px;height:4px;border-radius:4px 4px 0 0;background:#000"></div>
<div class="a" style="left:922px;top:587px;width:31px;height:40px;background:linear-gradient(#e1e3e6,#f6f7f9 55%,#f8f9fb);border-right:1px solid #dadcdf"></div>
<div class="a" style="left:922px;top:627px;width:31px;height:15px;background:linear-gradient(#f2f3f5,#dcdee1);border-right:1px solid #d0d2d5;border-top:1px solid #dcdde0"></div>
<div class="a" style="left:935.7px;top:601.7px;width:3.6px;height:3.6px;border-radius:50%;background:#000"></div>
<div class="a t" style="left:922px;top:611px;width:31px;text-align:center;font-size:12px">5</div>
<div class="a" style="left:932.0px;top:635.5px;width:11.0px;height:5.5px;border-radius:5.5px 5.5px 0 0;background:#000"></div>
<div class="a" style="left:953px;top:587px;width:31px;height:40px;background:linear-gradient(#e1e3e6,#f6f7f9 55%,#f8f9fb);border-right:1px solid #dadcdf"></div>
<div class="a" style="left:953px;top:627px;width:31px;height:15px;background:linear-gradient(#f2f3f5,#dcdee1);border-right:1px solid #d0d2d5;border-top:1px solid #dcdde0"></div>
<div class="a" style="left:966.2px;top:601.2px;width:4.6px;height:4.6px;border-radius:50%;background:#000"></div>
<div class="a t" style="left:953px;top:611px;width:31px;text-align:center;font-size:12px">6</div>
<div class="a" style="left:962.5px;top:635px;width:12px;height:6px;border-radius:6px 6px 0 0;background:#000"></div>
<div class="a" style="left:984px;top:587px;width:31px;height:40px;background:linear-gradient(#e1e3e6,#f6f7f9 55%,#f8f9fb);border-right:1px solid #dadcdf"></div>
<div class="a" style="left:984px;top:627px;width:31px;height:15px;background:linear-gradient(#f2f3f5,#dcdee1);border-right:1px solid #d0d2d5;border-top:1px solid #dcdde0"></div>
<div class="a" style="left:996.8px;top:600.8px;width:5.4px;height:5.4px;border-radius:50%;background:#000"></div>
<div class="a t" style="left:984px;top:611px;width:31px;text-align:center;font-size:12px">7</div>
<div class="a" style="left:992.0px;top:633.5px;width:15.0px;height:7.5px;border-radius:7.5px 7.5px 0 0;background:#000"></div>
<div class="a" style="left:1015px;top:587px;width:31px;height:40px;background:linear-gradient(#e1e3e6,#f6f7f9 55%,#f8f9fb);border-right:1px solid #dadcdf"></div>
<div class="a" style="left:1015px;top:627px;width:31px;height:15px;background:linear-gradient(#f2f3f5,#dcdee1);border-right:1px solid #d0d2d5;border-top:1px solid #dcdde0"></div>
<div class="a" style="left:1016px;top:627px;width:29px;height:15px;background:#cfe1ec;border:1px solid #aac4d4"></div>
<div class="a" style="left:1027.3px;top:600.3px;width:6.4px;height:6.4px;border-radius:50%;background:#000"></div>
<div class="a t" style="left:1015px;top:611px;width:31px;text-align:center;font-size:12px">8</div>
<div class="a" style="left:1021.0px;top:631.5px;width:19.0px;height:9.5px;border-radius:9.5px 9.5px 0 0;background:#000"></div>
<div class="a" style="left:1046px;top:587px;width:31px;height:40px;background:linear-gradient(#e1e3e6,#f6f7f9 55%,#f8f9fb);border-right:1px solid #dadcdf"></div>
<div class="a" style="left:1046px;top:627px;width:31px;height:15px;background:linear-gradient(#f2f3f5,#dcdee1);border-right:1px solid #d0d2d5;border-top:1px solid #dcdde0"></div>
<div class="a" style="left:1057.6px;top:599.6px;width:7.8px;height:7.8px;border-radius:50%;background:#000"></div>
<div class="a t" style="left:1046px;top:611px;width:31px;text-align:center;font-size:12px">10</div>
<div class="a" style="left:1051.5px;top:631px;width:20px;height:10px;border-radius:10px 10px 0 0;background:#000"></div>
<div class="a" style="left:1078px;top:587px;width:12px;height:55px;background:#d5d7da"></div>
<div class="a" style="left:1078px;top:589px;width:12px;height:11px;background:#f8f9fa;border:1px solid #dcdee1;border-radius:2px"></div>
<div class="a" style="left:1081px;top:593px;width:0;height:0;border-left:3.0px solid transparent;border-right:3.0px solid transparent;border-bottom:3px solid #444"></div>
<div class="a" style="left:1078px;top:603px;width:12px;height:12px;background:#f8f9fa;border:1px solid #dcdee1;border-radius:2px"></div>
<div class="a" style="left:1078px;top:630px;width:12px;height:11px;background:#f8f9fa;border:1px solid #dcdee1;border-radius:2px"></div>
<div class="a" style="left:1081px;top:634px;width:0;height:0;border-left:3.0px solid transparent;border-right:3.0px solid transparent;border-top:3px solid #444"></div>
<div class="a" style="left:890px;top:642px;width:201px;height:1px;background:#b4b5b8"></div>
<div class="a" style="left:890px;top:644px;width:201px;height:18px;background:linear-gradient(#e6e7ea,#d9dade);border-top:1px solid #b2b3b6;border-bottom:1px solid #b4b5b8"></div>
<div class="a" style="left:891px;top:647px;width:19px;height:15px;background:linear-gradient(#e2e3e6,#d3d4d8);border:1px solid #b9babd"></div>
<svg style="left:897px;top:650px;" width="9" height="9" viewBox="0 0 9 9"><path d="M0 1.5 L2.5 4.5 L0 7.5" fill="none" stroke="#9a9a9d" stroke-width="1.4"/><rect x="3.5" y="1" width="4.5" height="1.5" fill="#9a9a9d"/><rect x="3.5" y="4" width="4.5" height="1.5" fill="#9a9a9d"/><rect x="3.5" y="7" width="4.5" height="1.5" fill="#9a9a9d"/></svg>
<div class="a" style="left:909px;top:647px;width:83px;height:16px;background:linear-gradient(#f7f8fa,#f0f4f7);border:1px solid #b0b1b4;border-bottom:none"></div>
<svg style="left:913px;top:647px;" width="22" height="21" viewBox="0 0 22 21"><path d="M4 6 L6 16 L2 16Z" fill="#999" stroke="#555" stroke-width="0.6"/><path d="M10 0 L12 15 L8 15Z" fill="#888" stroke="#444" stroke-width="0.6"/><path d="M16 4 L18 16 L14 16Z" fill="#999" stroke="#555" stroke-width="0.6"/><rect x="1.5" y="16" width="5" height="5" fill="#d45a20"/><rect x="7.5" y="15" width="5" height="6" fill="#4aa0d8"/><rect x="13.5" y="16" width="5" height="5" fill="#3c9a3c"/></svg>
<div class="a t" style="left:936px;top:649px;font-size:11px;color:#000;letter-spacing:-1.5px">サブツール</div>
<div class="a" style="left:891px;top:666px;width:199px;height:28px;background:#f1f4f7;border-top:1px solid #8e8f92;border-left:1px solid #b0b0b0;border-right:1px solid #c8c8c8"></div>
<div class="a" style="left:892px;top:667px;width:25px;height:25px;background:linear-gradient(#d6e6f2,#c3d8e8);border:1px solid #a9c3d6;border-radius:2px"></div>
<svg style="left:894px;top:670px;" width="20" height="20" viewBox="0 0 20 20"><path d="M11 8 L21 1 M11 10 L21 16" stroke="#555" stroke-width="1" fill="none"/><rect x="6" y="4" width="4" height="5" fill="#444"/><path d="M2 10 C3 7 13 7 14 10 L14 18 L2 18Z" fill="#f8f8f8" stroke="#333" stroke-width="1"/><rect x="2" y="13" width="12" height="2" fill="#555"/></svg>
<div class="a" style="left:891px;top:694px;width:187px;height:70px;background:#f1f4f7;border-top:1px solid #8e8f92;border-left:1px solid #b0b0b0"></div>
<div class="a" style="left:892px;top:719px;width:186px;height:23px;background:linear-gradient(90deg,#cde0eb,#d6e6f0 60%,#cde0eb 85%,#e6eef3);border:1px solid #b5cad8;border-radius:2px"></div>
<div class="a" style="left:892px;top:753px;width:186px;height:11px;background:linear-gradient(#eceef0,#d2d4d7)"></div>
<svg style="left:910px;top:696px" width="100" height="24" viewBox="0 0 100 24"><defs><filter id="bl910696" x="-20%" y="-50%" width="140%" height="200%"><feGaussianBlur stdDeviation="0.8"/></filter></defs><path d="M12 9 C28 3 44 5 54 11 C64 17 78 18 90 13 C78 21 62 21 51 15 C41 9 28 6 12 9Z" fill="rgba(40,40,40,0.8)" filter="url(#bl910696)"/></svg>
<svg style="left:912px;top:720px" width="100" height="24" viewBox="0 0 100 24"><defs><filter id="bl912720" x="-20%" y="-50%" width="140%" height="200%"><feGaussianBlur stdDeviation="2.2"/></filter></defs><path d="M12 9 C28 3 44 5 54 11 C64 17 78 18 90 13 C78 21 62 21 51 15 C41 9 28 6 12 9Z" fill="rgba(40,40,40,0.85)" filter="url(#bl912720)"/></svg>
<svg style="left:912px;top:743px" width="100" height="24" viewBox="0 0 100 24"><defs><filter id="bl912743" x="-20%" y="-50%" width="140%" height="200%"><feGaussianBlur stdDeviation="1.4"/></filter></defs><path d="M12 9 C28 3 44 5 54 11 C64 17 78 18 90 13 C78 21 62 21 51 15 C41 9 28 6 12 9Z" fill="rgba(40,40,40,0.85)" filter="url(#bl912743)"/></svg>
<div class="a t" style="left:1000px;top:701px;width:74px;text-align:right;font-size:11px;letter-spacing:-0.5px">強め</div>
<div class="a t" style="left:1000px;top:726px;width:74px;text-align:right;font-size:11px;letter-spacing:-0.5px">柔らか</div>
<div class="a t" style="left:1000px;top:750px;width:74px;text-align:right;font-size:11px;letter-spacing:-0.5px">ハイライト</div>
<div class="a" style="left:1078px;top:694px;width:12px;height:70px;background:#d5d7da"></div>
<div class="a" style="left:1078px;top:695px;width:12px;height:11px;background:#f8f9fa;border:1px solid #dcdee1;border-radius:2px"></div>
<div class="a" style="left:1081px;top:699px;width:0;height:0;border-left:3.0px solid transparent;border-right:3.0px solid transparent;border-bottom:3px solid #444"></div>
<div class="a" style="left:1078px;top:707px;width:12px;height:16px;background:#f8f9fa;border:1px solid #dcdee1;border-radius:2px"></div>
<div class="a" style="left:1081px;top:712px;width:6px;height:5px;border-top:1px solid #888;border-bottom:1px solid #888"></div>
<div class="a" style="left:1081px;top:714px;width:6px;height:1px;background:#888"></div>
<div class="a" style="left:1078px;top:753px;width:12px;height:11px;background:#f8f9fa;border:1px solid #dcdee1;border-radius:2px"></div>
<div class="a" style="left:1081px;top:757px;width:0;height:0;border-left:3.0px solid transparent;border-right:3.0px solid transparent;border-top:3px solid #444"></div>
<div class="a" style="left:890px;top:764px;width:201px;height:1px;background:#b4b5b8"></div>
<svg style="left:1054px;top:767px;" width="15" height="16" viewBox="0 0 15 16"><path d="M1 1 L13 1 L13 10 L8 15 L1 15Z" fill="#fff" stroke="#333" stroke-width="1"/><path d="M13 10 L8 10 L8 15" fill="#ddd" stroke="#333" stroke-width="1"/></svg>
<svg style="left:1074px;top:767px;" width="14" height="16" viewBox="0 0 14 16"><ellipse cx="7" cy="3" rx="6" ry="2.5" fill="#ddd" stroke="#333" stroke-width="1"/><path d="M1.5 4 L3 15 L11 15 L12.5 4" fill="#f2f2f2" stroke="#333" stroke-width="1"/><path d="M5 6 L5.5 13 M9 6 L8.5 13" stroke="#777" stroke-width="0.8"/></svg>
<div class="a" style="left:890px;top:786px;width:201px;height:1px;background:#b4b5b8"></div>
<div class="a" style="left:890px;top:787px;width:201px;height:18px;background:linear-gradient(#e6e7ea,#d9dade);border-top:1px solid #b2b3b6;border-bottom:1px solid #b4b5b8"></div>
<div class="a" style="left:891px;top:789px;width:19px;height:15px;background:linear-gradient(#e2e3e6,#d3d4d8);border:1px solid #b9babd"></div>
<svg style="left:897px;top:792px;" width="9" height="9" viewBox="0 0 9 9"><path d="M0 1.5 L2.5 4.5 L0 7.5" fill="none" stroke="#9a9a9d" stroke-width="1.4"/><rect x="3.5" y="1" width="4.5" height="1.5" fill="#9a9a9d"/><rect x="3.5" y="4" width="4.5" height="1.5" fill="#9a9a9d"/><rect x="3.5" y="7" width="4.5" height="1.5" fill="#9a9a9d"/></svg>
<div class="a" style="left:909px;top:789px;width:114px;height:16px;background:linear-gradient(#f7f8fa,#f0f4f7);border:1px solid #b0b1b4;border-bottom:none"></div>
<svg style="left:913px;top:789px;" width="22" height="20" viewBox="0 0 22 20"><path d="M4 0 L6 12 L5 15 L2 15 L1 12Z" fill="#888" stroke="#444" stroke-width="0.6"/><path d="M1 15 L6 15 L7 20 L0 20Z" fill="#2f8fc0"/><circle cx="14" cy="9" r="5" fill="#777"/><circle cx="14" cy="9" r="6.5" fill="none" stroke="#888" stroke-width="2" stroke-dasharray="2 1.4"/><circle cx="14" cy="9" r="2" fill="#ddd"/></svg>
<div class="a t" style="left:937px;top:792px;font-size:11px;color:#000;letter-spacing:-1.5px">ツールプロパティ</div>
<div class="a" style="left:891px;top:809px;width:100px;height:40px;background:linear-gradient(#bdbdbd,#b0b0b0)"></div>
<div class="a" style="left:991px;top:809px;width:99px;height:40px;background:#f6f7f9"></div>
<svg style="left:891px;top:809px" width="199" height="40" viewBox="0 0 199 40"><defs><filter id="tpb" x="-20%" y="-80%" width="140%" height="260%"><feGaussianBlur stdDeviation="4.5"/></filter></defs><path d="M15 32 C45 10 85 6 115 20 C135 29 155 30 180 20 C160 36 138 38 112 29 C88 19 52 18 15 32Z" fill="rgba(40,40,40,0.8)" filter="url(#tpb)"/></svg>
<div class="a" style="left:891px;top:809px;width:36px;height:17px;background:#d9d9d9"></div>
<div class="a t" style="left:892px;top:811px;font-size:12px">柔らか</div>
<svg style="left:1071px;top:830px;" width="18" height="17" viewBox="0 0 18 17"><circle cx="7" cy="7" r="6" fill="#ddd" stroke="#444" stroke-width="2"/><circle cx="7" cy="7" r="3" fill="none" stroke="#444" stroke-width="1.5"/><path d="M11 11 L17 16" stroke="#444" stroke-width="3"/></svg>
<div class="a" style="left:890px;top:849px;width:1px;height:88px;background:#a0a0a0"></div>
<div class="a" style="left:891px;top:849px;width:187px;height:88px;background:#f1f4f7"></div>
<div class="a" style="left:891px;top:849px;width:187px;height:16px;background:linear-gradient(#e4e6e9,#f6f7f9)"></div>
<div class="a" style="left:891px;top:918px;width:187px;height:19px;background:linear-gradient(#f5f6f8,#dcdee1)"></div>
<div class="a" style="left:901px;top:866px;width:175px;height:1px;background:#d0d2d5"></div>
<div class="a" style="left:901px;top:889px;width:175px;height:1px;background:#d0d2d5"></div>
<div class="a" style="left:901px;top:916px;width:175px;height:1px;background:#d0d2d5"></div>
<div class="a t" style="left:914px;top:842px;font-size:12px;clip-path:inset(7px 0 0 0)">ブラシサイズ</div>
<div class="a t" style="left:1000px;top:846px;width:44px;text-align:right;font-size:12px">25.0</div>
<div class="a" style="left:929px;top:855px;width:74px;height:9px;border:1px solid #9c9ea1;border-top:none;background:#f1f4f7"></div>
<div class="a" style="left:930px;top:855px;width:40px;height:8px;background:linear-gradient(90deg,#f8f8f8,#d8d8d8 40%,#bdbdbd)"></div>
<div class="a" style="left:1049px;top:857px;width:0;height:0;border-left:4.5px solid transparent;border-right:4.5px solid transparent;border-top:5px solid #aaa"></div>
<div class="a" style="left:1062px;top:845px;width:13px;height:19px;background:linear-gradient(#f0f1f3,#e0e2e5);border:1px solid #c6c8cb;border-radius:0 0 3px 3px"></div>
<div class="a" style="left:1066px;top:849px;width:5px;height:6px;background:#888"></div>
<div class="a t" style="left:910px;top:870px;font-size:11px;letter-spacing:-0.6px">合成モード</div>
<div class="a" style="left:967px;top:868px;width:108px;height:20px;background:linear-gradient(#fafbfc,#eceef0);border:1px solid #b6b8bb;border-radius:3px"></div>
<div class="a t" style="left:1003px;top:871px;font-size:12px">通常</div>
<div class="a" style="left:1064px;top:875px;width:0;height:0;border-left:4.5px solid transparent;border-right:4.5px solid transparent;border-top:5px solid #333"></div>
<div class="a t" style="left:910px;top:890px;font-size:11px;letter-spacing:-0.6px">硬さ</div>
<div class="a t" style="left:1038px;top:896px;font-size:12px">1</div>
<div class="a" style="left:1049px;top:898px;width:0;height:0;border-left:4.5px solid transparent;border-right:4.5px solid transparent;border-bottom:5px solid #aaa"></div>
<div class="a" style="left:1049px;top:905px;width:0;height:0;border-left:4.5px solid transparent;border-right:4.5px solid transparent;border-top:5px solid #aaa"></div>
<div class="a" style="left:929px;top:905px;width:74px;height:9px;border:1px solid #9c9ea1;border-top:none"></div>
<div class="a t" style="left:910px;top:917px;font-size:11px;letter-spacing:-0.6px">ブラシ濃度</div>
<div class="a t" style="left:1000px;top:923px;width:44px;text-align:right;font-size:12px">50</div>
<div class="a" style="left:1049px;top:925px;width:0;height:0;border-left:4.5px solid transparent;border-right:4.5px solid transparent;border-bottom:5px solid #aaa"></div>
<div class="a" style="left:1049px;top:932px;width:0;height:0;border-left:4.5px solid transparent;border-right:4.5px solid transparent;border-top:5px solid #aaa"></div>
<div class="a" style="left:1062px;top:919px;width:13px;height:19px;background:linear-gradient(#f4f5f7,#e0e2e5);border:1px solid #c6c8cb;border-radius:3px 3px 0 0"></div>
<svg style="left:1063px;top:922px;" width="11" height="12" viewBox="0 0 11 12"><path d="M4 1 L7 1 L7 5 L9 5 L5.5 9 L2 5 L4 5Z" fill="#666"/><path d="M1 8 L1 10 L10 10 L10 8" fill="none" stroke="#666" stroke-width="1.3"/></svg>
<div class="a" style="left:929px;top:932px;width:38px;height:5px;background:linear-gradient(90deg,#ccc,#aaa)"></div>
<div class="a" style="left:1078px;top:849px;width:12px;height:88px;background:#d5d7da"></div>
<div class="a" style="left:1078px;top:850px;width:12px;height:12px;background:#f8f9fa;border:1px solid #dcdee1;border-radius:2px"></div>
<div class="a" style="left:1081px;top:854px;width:0;height:0;border-left:3.0px solid transparent;border-right:3.0px solid transparent;border-bottom:3px solid #444"></div>
<div class="a" style="left:1078px;top:867px;width:12px;height:34px;background:linear-gradient(90deg,#f6f7f9,#fdfdfe,#eceef1);border:1px solid #dcdee1;border-radius:2px"></div>
<div class="a" style="left:1081px;top:880px;width:6px;height:6px;border-top:1px solid #888;border-bottom:1px solid #888"></div>
<div class="a" style="left:1081px;top:882px;width:6px;height:1px;background:#888"></div>
<div class="a" style="left:1078px;top:927px;width:12px;height:10px;background:#f8f9fa;border:1px solid #dcdee1;border-radius:2px"></div>
<div class="a" style="left:1081px;top:930px;width:0;height:0;border-left:3.0px solid transparent;border-right:3.0px solid transparent;border-top:3px solid #444"></div>
<div class="a" style="left:890px;top:937px;width:201px;height:1px;background:#a8aaad"></div>
<svg style="left:1053px;top:939px;" width="17" height="17" viewBox="0 0 17 17"><g fill="#555"><rect x="7.5" y="0" width="2" height="5" transform="rotate(0 8.5 8.5)" opacity="0.4"/><rect x="7.5" y="0" width="2" height="5" transform="rotate(45 8.5 8.5)" opacity="0.7"/><rect x="7.5" y="0" width="2" height="5" transform="rotate(90 8.5 8.5)" opacity="1.0"/><rect x="7.5" y="0" width="2" height="5" transform="rotate(135 8.5 8.5)" opacity="0.4"/><rect x="7.5" y="0" width="2" height="5" transform="rotate(180 8.5 8.5)" opacity="0.7"/><rect x="7.5" y="0" width="2" height="5" transform="rotate(225 8.5 8.5)" opacity="1.0"/><rect x="7.5" y="0" width="2" height="5" transform="rotate(270 8.5 8.5)" opacity="0.4"/><rect x="7.5" y="0" width="2" height="5" transform="rotate(315 8.5 8.5)" opacity="0.7"/></g></svg>
<svg style="left:1074px;top:939px;" width="16" height="18" viewBox="0 0 16 18"><path d="M2 1 L2 6 C2 8 4 9 6 9 L6 17 L10 17 L10 9 C12 9 14 8 14 6 L14 1 L11 1 L11 5 L9 6 L7 6 L5 5 L5 1Z" fill="#444"/></svg>
<div class="a" style="left:1092px;top:68px;width:185px;height:889px;background:#f0f4f7"></div>
<div class="a" style="left:1092px;top:70px;width:185px;height:16px;background:linear-gradient(#e6e7ea,#d9dade);border-top:1px solid #b2b3b6"></div>
<div class="a" style="left:1093px;top:71px;width:19px;height:15px;background:linear-gradient(#e2e3e6,#d3d4d8);border:1px solid #b9babd"></div>
<svg style="left:1099px;top:74px;" width="9" height="9" viewBox="0 0 9 9"><path d="M0 1.5 L2.5 4.5 L0 7.5" fill="none" stroke="#9a9a9d" stroke-width="1.4"/><rect x="3.5" y="1" width="4.5" height="1.5" fill="#9a9a9d"/><rect x="3.5" y="4" width="4.5" height="1.5" fill="#9a9a9d"/><rect x="3.5" y="7" width="4.5" height="1.5" fill="#9a9a9d"/></svg>
<div class="a" style="left:1111px;top:71px;width:93px;height:16px;background:linear-gradient(#f7f8fa,#f0f4f7);border:1px solid #b0b1b4;border-bottom:none"></div>
<svg style="left:1116px;top:73px;" width="19" height="17" viewBox="0 0 19 17"><rect x="1" y="1" width="12" height="9" fill="#fff" stroke="#c21d1d" stroke-width="1.8" rx="1"/><path d="M13 4 L16 4 L16 13 L5 13 L5 10.5" fill="none" stroke="#555" stroke-width="1.2"/></svg>
<div class="a t" style="left:1139px;top:73px;font-size:11px;color:#000;letter-spacing:-1.5px">ナビゲーター</div>
<div class="a" style="left:1204px;top:71px;width:28px;height:15px;background:linear-gradient(#e4e5e8,#d6d7db);border:1px solid #b6b7ba;border-bottom:none"></div>
<svg style="left:1211px;top:73px;" width="14" height="13" viewBox="0 0 14 13"><rect x="0.5" y="0.5" width="13" height="13" fill="#e8e8e8" stroke="#888"/><rect x="0.5" y="0.5" width="13" height="3" fill="#777"/><path d="M3 12 L5 10" stroke="#777"/></svg>
<div class="a" style="left:1204px;top:86px;width:73px;height:1px;background:#b4b5b8"></div>
<div class="a" style="left:1093px;top:91px;width:184px;height:100px;background:#c8c8c8;border-top:1px solid #6a6a6a;border-left:1px solid #7a7a7a"></div>
<div class="a" style="left:1133px;top:102px;width:105px;height:78px;background:#fff"></div>
<div class="a" style="left:1132px;top:91px;width:1px;height:100px;background:#b8161c;box-shadow:1px 0 0 rgba(255,120,120,0.5)"></div>
<div class="a" style="left:1238px;top:91px;width:1px;height:100px;background:#b8161c;box-shadow:1px 0 0 rgba(255,120,120,0.5)"></div>
<div class="a" style="left:1098px;top:198px;width:66px;height:12px;background:#fff;border:1px solid #c0c0c0"></div>
<svg style="left:1098px;top:198px" width="66" height="12"><path d="M22 12 L66 0 L66 12Z" fill="#a9a9a9"/></svg>
<div class="a t" style="left:1100px;top:197px;font-size:12px;letter-spacing:-0.5px">26.3</div>
<div class="a" style="left:1124px;top:194px;width:4px;height:20px;background:linear-gradient(90deg,#ddd,#f8f8f8,#ccc);border:1px solid #c8c8c8"></div>
<div class="a" style="left:1098px;top:218px;width:66px;height:12px;background:#fff;border:1px solid #c0c0c0"></div>
<svg style="left:1098px;top:218px" width="66" height="12"><path d="M0 0 C8 8 14 12 18 12 L0 12Z M26 12 C36 0 46 0 66 12Z" fill="#a9a9a9"/><path d="M28 12 C38 2 48 2 66 10 L66 12Z" fill="#a9a9a9"/></svg>
<div class="a t" style="left:1100px;top:217px;font-size:12px;letter-spacing:-0.5px">0.0</div>
<div class="a" style="left:1130px;top:214px;width:4px;height:21px;background:linear-gradient(90deg,#ddd,#f8f8f8,#ccc);border:1px solid #c8c8c8"></div>
<svg style="left:1172px;top:196px;" width="16" height="16" viewBox="0 0 16 16"><circle cx="7" cy="7" r="6" fill="#fff" stroke="#222" stroke-width="1.3"/><circle cx="7" cy="7" r="4.3" fill="none" stroke="#999" stroke-width="0.7"/><path d="M10.5 10.5 L15 15" stroke="#111" stroke-width="2.4"/><path d="M4.5 7 L9.5 7" stroke="#111" stroke-width="1.8"/></svg>
<svg style="left:1192px;top:196px;" width="16" height="16" viewBox="0 0 16 16"><circle cx="7" cy="7" r="6" fill="#fff" stroke="#222" stroke-width="1.3"/><circle cx="7" cy="7" r="4.3" fill="none" stroke="#999" stroke-width="0.7"/><path d="M10.5 10.5 L15 15" stroke="#111" stroke-width="2.4"/><path d="M4.5 7 L9.5 7" stroke="#111" stroke-width="1.8"/><path d="M7 4.5 L7 9.5" stroke="#111" stroke-width="1.8"/></svg>
<div class="a" style="left:1211px;top:196px;width:16px;height:16px;background:#222;border:3px solid #111"></div>
<div class="a" style="left:1214px;top:199px;width:10px;height:10px;border:1px solid #ddd;background:#222"></div>
<svg style="left:1239px;top:196px;" width="17" height="17" viewBox="0 0 17 17"><rect x="0.5" y="1" width="11" height="8" fill="#fff" stroke="#333"/><rect x="0.5" y="1" width="11" height="2" fill="#333"/><rect x="5.5" y="7" width="11" height="8" fill="#fff" stroke="#333"/><path d="M4 4 L11 11 M11 11 L11 7 M11 11 L7 11" stroke="#111" stroke-width="1.5"/></svg>
<svg style="left:1259px;top:196px;" width="17" height="17" viewBox="0 0 17 17"><rect x="0.5" y="0.5" width="16" height="14" fill="#fff" stroke="#333"/><rect x="0.5" y="0.5" width="16" height="2" fill="#333"/><path d="M3 4 L13 12 M13 12 L13 8 M13 12 L9 12 M3 4 L3 8 M3 4 L7 4" stroke="#111" stroke-width="1.6"/></svg>
<svg style="left:1172px;top:216px;" width="16" height="17" viewBox="0 0 16 17"><path d="M3.5 9 A6 6 0 1 1 12 13.5" fill="none" stroke="#111" stroke-width="2.6"/><path d="M0 7.5 L7.5 7.5 L3.5 14Z" fill="#111"/></svg>
<svg style="left:1191px;top:216px;" width="16" height="17" viewBox="0 0 16 17"><path d="M12.5 9 A6 6 0 1 0 4 13.5" fill="none" stroke="#111" stroke-width="2.6"/><path d="M16 7.5 L8.5 7.5 L12.5 14Z" fill="#111"/></svg>
<svg style="left:1211px;top:216px;" width="16" height="16" viewBox="0 0 16 16"><g fill="#444"><rect x="7" y="0" width="2" height="5" transform="rotate(15 8 8)"/><rect x="7" y="0" width="2" height="5" transform="rotate(60 8 8)"/><rect x="7" y="0" width="2" height="5" transform="rotate(105 8 8)"/><rect x="7" y="0" width="2" height="5" transform="rotate(150 8 8)"/><rect x="7" y="0" width="2" height="5" transform="rotate(195 8 8)"/><rect x="7" y="0" width="2" height="5" transform="rotate(240 8 8)"/><rect x="7" y="0" width="2" height="5" transform="rotate(285 8 8)"/><rect x="7" y="0" width="2" height="5" transform="rotate(330 8 8)"/></g></svg>
<svg style="left:1240px;top:216px;" width="17" height="17" viewBox="0 0 17 17"><path d="M4 8 C4 2 12 0 14 6" fill="none" stroke="#222" stroke-width="1.8"/><path d="M12 3 L16 7 L12 9Z" fill="#222"/><path d="M1 9 L7 12 L1 16Z" fill="none" stroke="#555" stroke-width="0.8"/><path d="M16 9 L10 12 L16 16Z" fill="#222"/><path d="M8.5 8 L8.5 17" stroke="#555" stroke-dasharray="1.5 1"/></svg>
<svg style="left:1259px;top:216px;" width="17" height="17" viewBox="0 0 17 17"><path d="M8 3 C2 3 1 13 7 14" fill="none" stroke="#222" stroke-width="1.8"/><path d="M9 1 L17 1 L13 6Z" fill="#222"/><path d="M9 17 L17 17 L13 12Z" fill="none" stroke="#555" stroke-width="0.8"/><path d="M8 9 L17 9" stroke="#555" stroke-dasharray="1.5 1"/></svg>
<div class="a" style="left:1092px;top:235px;width:185px;height:1px;background:#c4c5c8"></div>
<div class="a" style="left:1092px;top:237px;width:185px;height:17px;background:linear-gradient(#e6e7ea,#d9dade);border-top:1px solid #b2b3b6;border-bottom:1px solid #b4b5b8"></div>
<div class="a" style="left:1093px;top:239px;width:19px;height:15px;background:linear-gradient(#e2e3e6,#d3d4d8);border:1px solid #b9babd"></div>
<svg style="left:1099px;top:242px;" width="9" height="9" viewBox="0 0 9 9"><path d="M0 1.5 L2.5 4.5 L0 7.5" fill="none" stroke="#9a9a9d" stroke-width="1.4"/><rect x="3.5" y="1" width="4.5" height="1.5" fill="#9a9a9d"/><rect x="3.5" y="4" width="4.5" height="1.5" fill="#9a9a9d"/><rect x="3.5" y="7" width="4.5" height="1.5" fill="#9a9a9d"/></svg>
<div class="a" style="left:1111px;top:239px;width:123px;height:16px;background:linear-gradient(#f7f8fa,#f0f4f7);border:1px solid #b0b1b4;border-bottom:none"></div>
<svg style="left:1116px;top:240px;" width="19" height="16" viewBox="0 0 19 16"><path d="M2 7 L6 11 L17 1 L8 12 L6 13Z" fill="#d0141a"/><rect x="1" y="12" width="16" height="4" fill="#111"/></svg>
<div class="a t" style="left:1140px;top:241px;font-size:11px;color:#000;letter-spacing:-1.5px">レイヤープロパティ</div>
<div class="a" style="left:1234px;top:239px;width:28px;height:15px;background:linear-gradient(#e4e5e8,#d6d7db);border:1px solid #b6b7ba;border-bottom:none"></div>
<svg style="left:1241px;top:241px;" width="16" height="13" viewBox="0 0 16 13"><path d="M1 3 L8 0 L15 3 L8 6Z M1 6 L8 9 L15 6 M1 9 L8 12 L15 9" fill="none" stroke="#999" stroke-width="1"/></svg>
<div class="a" style="left:1093px;top:258px;width:171px;height:42px;background:#f1f4f7;border:1px solid #a8aaad"></div>
<div class="a" style="left:1264px;top:258px;width:13px;height:42px;background:#cfd1d4;border:1px solid #b8babd"></div>
<div class="a t" style="left:1112px;top:263px;font-size:12px">効果</div>
<div class="a" style="left:1175px;top:261px;width:86px;height:20px;background:linear-gradient(#fbfbfc,#e6e8ea);border:1px solid #b8babd;border-radius:3px"></div>
<div class="a" style="left:1182px;top:265px;width:11px;height:11px;border-radius:50%;background:#555"></div>
<div class="a" style="left:1203px;top:263px;width:16px;height:15px;background-color:#fff;background-image:linear-gradient(45deg,#333 25%,transparent 25%,transparent 75%,#333 75%),linear-gradient(45deg,#333 25%,transparent 25%,transparent 75%,#333 75%);background-size:4px 4px;background-position:0 0,2px 2px"></div>
<div class="a" style="left:1230px;top:266px;width:13px;height:13px;background:#111"></div>
<div class="a" style="left:1227px;top:263px;width:13px;height:13px;background:#4ab0e0;border:1px solid #3a90c0"></div>
<div class="a" style="left:1250px;top:268px;width:0;height:0;border-left:4.5px solid transparent;border-right:4.5px solid transparent;border-top:5px solid #333"></div>
<div class="a" style="left:1092px;top:301px;width:185px;height:1px;background:#b4b5b8"></div>
<div class="a" style="left:1092px;top:302px;width:185px;height:17px;background:linear-gradient(#e6e7ea,#d9dade);border-top:1px solid #b2b3b6;border-bottom:1px solid #b4b5b8"></div>
<div class="a" style="left:1093px;top:304px;width:19px;height:15px;background:linear-gradient(#e2e3e6,#d3d4d8);border:1px solid #b9babd"></div>
<svg style="left:1099px;top:307px;" width="9" height="9" viewBox="0 0 9 9"><path d="M0 1.5 L2.5 4.5 L0 7.5" fill="none" stroke="#9a9a9d" stroke-width="1.4"/><rect x="3.5" y="1" width="4.5" height="1.5" fill="#9a9a9d"/><rect x="3.5" y="4" width="4.5" height="1.5" fill="#9a9a9d"/><rect x="3.5" y="7" width="4.5" height="1.5" fill="#9a9a9d"/></svg>
<div class="a" style="left:1111px;top:304px;width:73px;height:15px;background:linear-gradient(#f7f8fa,#f0f4f7);border:1px solid #b0b1b4;border-bottom:none"></div>
<svg style="left:1116px;top:305px;" width="16" height="15" viewBox="0 0 16 15"><path d="M1 3 C5 -1 11 5 15 1 M1 8 C5 4 11 10 15 6 M1 13 C5 9 11 15 15 11" fill="none" stroke="#333" stroke-width="1.4"/><path d="M2 4 C6 7 10 2 14 6 M2 9 C6 12 10 7 14 11" fill="none" stroke="#666" stroke-width="0.8"/></svg>
<div class="a t" style="left:1140px;top:306px;font-size:11px;color:#000;letter-spacing:-1.5px">レイヤー</div>
<div class="a" style="left:1184px;top:304px;width:84px;height:15px;background:linear-gradient(#dcdde0,#cfd0d4);border:1px solid #b6b7ba;border-bottom:none"></div>
<svg style="left:1190px;top:305px;" width="17" height="14" viewBox="0 0 17 14"><circle cx="6" cy="9" r="4.5" fill="none" stroke="#888" stroke-width="2"/><rect x="10" y="1" width="4" height="5" fill="#777"/></svg>
<div class="a t" style="left:1213px;top:306px;font-size:10px;color:#aaa">ヒストリー</div>
<div class="a" style="left:1094px;top:324px;width:90px;height:19px;background:linear-gradient(#fafbfc,#e8eaec);border:1px solid #b8babd;border-radius:3px"></div>
<div class="a t" style="left:1122px;top:327px;font-size:12px">通常</div>
<div class="a" style="left:1173px;top:331px;width:0;height:0;border-left:4.5px solid transparent;border-right:4.5px solid transparent;border-top:5px solid #333"></div>
<div class="a" style="left:1191px;top:329px;width:43px;height:9px;background:linear-gradient(90deg,rgba(150,150,150,0.15),rgba(140,140,140,0.85)),conic-gradient(#bbb 90deg,#f4f4f4 90deg 180deg,#bbb 180deg 270deg,#f4f4f4 270deg) 0 0/8px 8px;border:1px solid #ccc"></div>
<div class="a" style="left:1232px;top:325px;width:3px;height:18px;background:#c8c8c8"></div>
<div class="a t" style="left:1243px;top:326px;font-size:12px">100</div>
<div class="a" style="left:1265px;top:328px;width:0;height:0;border-left:5.0px solid transparent;border-right:5.0px solid transparent;border-bottom:5px solid #aaa"></div>
<div class="a" style="left:1265px;top:336px;width:0;height:0;border-left:5.0px solid transparent;border-right:5.0px solid transparent;border-top:5px solid #aaa"></div>
<div class="a" style="left:1094px;top:346px;width:39px;height:19px;background:linear-gradient(#f8f9fa,#e6e8ea);border:1px solid #c0c2c5;border-radius:3px"></div>
<div class="a" style="left:1097px;top:348px;width:19px;height:16px;background:#fff;border:1px solid #aaa"></div>
<svg style="left:1121px;top:346px;" width="20" height="17" viewBox="0 0 20 17"><ellipse cx="10" cy="5" rx="8" ry="4" fill="none" stroke="#555" stroke-width="1"/><path d="M1 8 C5 6 15 6 19 8 C17 14 3 14 1 8Z" fill="#333"/><path d="M3 9 C6 8 14 8 17 9" stroke="#aaa" stroke-width="0.8" fill="none"/></svg>
<svg style="left:1148px;top:346px;" width="9" height="19" viewBox="0 0 9 19"><path d="M3 5 L6 5 L8 18 L1 18Z" fill="#666"/><rect x="3" y="1" width="3" height="4" fill="#333"/><path d="M0 3 L-3 1 M9 3 L12 1" stroke="#ccc" stroke-width="0.6"/></svg>
<svg style="left:1165px;top:346px;" width="14" height="19" viewBox="0 0 14 19"><path d="M3 8 L3 5 C3 1 11 1 11 5 L11 8" fill="none" stroke="#333" stroke-width="2"/><rect x="1" y="8" width="12" height="10" fill="#555" stroke="#333" rx="1"/><rect x="6" y="11" width="2" height="4" fill="#ddd"/></svg>
<svg style="left:1183px;top:346px;" width="19" height="19" viewBox="0 0 19 19"><path d="M2 5 L2 3 C2 0 8 0 8 3 L8 5" fill="none" stroke="#333" stroke-width="1.5"/><rect x="0.5" y="5" width="9" height="7" fill="#fff" stroke="#333"/><rect x="9" y="9" width="9" height="9" fill="#ddd" stroke="#444"/><rect x="9" y="9" width="4.5" height="4.5" fill="#888"/><rect x="13.5" y="13.5" width="4.5" height="4.5" fill="#888"/></svg>
<div class="a" style="left:1203px;top:346px;width:36px;height:20px;background:linear-gradient(#f8f9fa,#e6e8ea);border:1px solid #c8cacd;border-radius:3px"></div>
<div class="a" style="left:1207px;top:349px;width:18px;height:15px;background:#d0d0d0"></div>
<div class="a" style="left:1227px;top:354px;width:0;height:0;border-left:4.0px solid transparent;border-right:4.0px solid transparent;border-top:4px solid #bbb"></div>
<div class="a" style="left:1241px;top:346px;width:36px;height:20px;background:linear-gradient(#f8f9fa,#e6e8ea);border:1px solid #c8cacd;border-radius:3px"></div>
<svg style="left:1244px;top:348px;" width="20" height="16" viewBox="0 0 20 16"><path d="M1 15 L15 1 L15 15Z" fill="#ddd" stroke="#bbb"/><path d="M4 6 L14 15 M14 6 L5 15" stroke="#bbb" stroke-width="1.6"/></svg>
<div class="a" style="left:1266px;top:354px;width:0;height:0;border-left:4.0px solid transparent;border-right:4.0px solid transparent;border-top:4px solid #bbb"></div>
<div class="a" style="left:1096px;top:368px;width:169px;height:466px;background:#f1f4f7;border:1px solid #a8aaad;border-right:none"></div>
<div class="a" style="left:1265px;top:368px;width:12px;height:466px;background:#cfd1d4;border-left:1px solid #b8babd"></div>
<div class="a" style="left:1136px;top:368px;width:129px;height:41px;background:linear-gradient(#dae7f1,#cde0ec)"></div>
<div class="a" style="left:1117px;top:368px;width:1px;height:82px;background:#b4b6b9"></div>
<div class="a" style="left:1135px;top:368px;width:1px;height:82px;background:#b4b6b9"></div>
<div class="a" style="left:1097px;top:409px;width:168px;height:1px;background:#b8babd"></div>
<div class="a" style="left:1097px;top:450px;width:168px;height:1px;background:#b8babd"></div>
<svg style="left:1102px;top:384px;" width="13" height="9" viewBox="0 0 13 9"><path d="M0.5 4.5 C3 0 10 0 12.5 4.5 C10 9 3 9 0.5 4.5Z" fill="#ddd" stroke="#222" stroke-width="1.2"/><circle cx="6.5" cy="4.5" r="2.6" fill="#222"/></svg>
<svg style="left:1102px;top:424px;" width="13" height="9" viewBox="0 0 13 9"><path d="M0.5 4.5 C3 0 10 0 12.5 4.5 C10 9 3 9 0.5 4.5Z" fill="#ddd" stroke="#222" stroke-width="1.2"/><circle cx="6.5" cy="4.5" r="2.6" fill="#222"/></svg>
<svg style="left:1120px;top:381px;" width="14" height="13" viewBox="0 0 14 13"><path d="M1 12 C2 9 6 6 9 4 L10 2 L13 1 L12 4 L10 5 C8 8 4 11 1 12Z" fill="#fafafa" stroke="#222" stroke-width="1.1"/><path d="M10 2 L13 1 L12 4Z" fill="#222"/></svg>
<div class="a" style="left:1140px;top:370px;width:38px;height:37px;background:#fff;border:1.5px solid #111"></div>
<div class="a" style="left:1142px;top:372px;width:34px;height:33px;border:1.5px solid #222;background:#fff"></div>
<div class="a" style="left:1143.5px;top:373.5px;width:31px;height:30px;background:conic-gradient(#d6d2d0 90deg,#fff 90deg 180deg,#d6d2d0 180deg 270deg,#fff 270deg) 0 0/8px 8px;border-top:3px solid #555;border-bottom:4px solid #555"></div>
<div class="a t" style="left:1181px;top:371px;font-size:12px"><span class="m" style="letter-spacing:-0.8px">100 %&nbsp;</span>通常</div>
<div class="a t" style="left:1181px;top:390px;font-size:12px;transform:scaleX(0.8);transform-origin:0 0">レイヤー <span class="m">1</span></div>
<div class="a" style="left:1141px;top:412px;width:36px;height:35px;background:#fff;border:1.5px solid #111"></div>
<div class="a" style="left:1179px;top:412px;width:21px;height:21px;background:#fff;border:1px solid #222"></div>
<svg style="left:1183px;top:415px;" width="13" height="15" viewBox="0 0 13 15"><path d="M0.5 0.5 L8 0.5 L12.5 5 L12.5 14.5 L0.5 14.5Z" fill="#eee" stroke="#333"/><path d="M8 0.5 L8 5 L12.5 5" fill="none" stroke="#333"/></svg>
<div class="a t" style="left:1181px;top:432px;font-size:12px">用紙</div>
<div class="a" style="left:1093px;top:834px;width:184px;height:5px;background:#f0f4f7"></div>
<svg style="left:1178px;top:835px;" width="20" height="2" viewBox="0 0 20 2"><g fill="#888"><rect x="0" y="0" width="1" height="1"/><rect x="4" y="0" width="1" height="1"/><rect x="8" y="0" width="1" height="1"/><rect x="12" y="0" width="1" height="1"/><rect x="16" y="0" width="1" height="1"/></g></svg>
<div class="a" style="left:0;top:838px;width:1280px;height:61px;overflow:hidden">
<div class="a" style="left:0;top:-838px;width:1280px;height:960px">
<div class="a" style="left:1096px;top:838px;width:169px;height:70px;background:#f1f4f7;border:1px solid #a8aaad;border-right:none"></div>
<div class="a" style="left:1136px;top:838px;width:129px;height:41px;background:linear-gradient(#dae7f1,#cde0ec)"></div>
<div class="a" style="left:1117px;top:838px;width:1px;height:82px;background:#b4b6b9"></div>
<div class="a" style="left:1135px;top:838px;width:1px;height:82px;background:#b4b6b9"></div>
<div class="a" style="left:1097px;top:879px;width:168px;height:1px;background:#b8babd"></div>
<div class="a" style="left:1097px;top:920px;width:168px;height:1px;background:#b8babd"></div>
<svg style="left:1102px;top:854px;" width="13" height="9" viewBox="0 0 13 9"><path d="M0.5 4.5 C3 0 10 0 12.5 4.5 C10 9 3 9 0.5 4.5Z" fill="#ddd" stroke="#222" stroke-width="1.2"/><circle cx="6.5" cy="4.5" r="2.6" fill="#222"/></svg>
<svg style="left:1102px;top:894px;" width="13" height="9" viewBox="0 0 13 9"><path d="M0.5 4.5 C3 0 10 0 12.5 4.5 C10 9 3 9 0.5 4.5Z" fill="#ddd" stroke="#222" stroke-width="1.2"/><circle cx="6.5" cy="4.5" r="2.6" fill="#222"/></svg>
<svg style="left:1120px;top:851px;" width="14" height="13" viewBox="0 0 14 13"><path d="M1 12 C2 9 6 6 9 4 L10 2 L13 1 L12 4 L10 5 C8 8 4 11 1 12Z" fill="#fafafa" stroke="#222" stroke-width="1.1"/><path d="M10 2 L13 1 L12 4Z" fill="#222"/></svg>
<div class="a" style="left:1140px;top:840px;width:38px;height:37px;background:#fff;border:1.5px solid #111"></div>
<div class="a" style="left:1142px;top:842px;width:34px;height:33px;border:1.5px solid #222;background:#fff"></div>
<div class="a" style="left:1143.5px;top:843.5px;width:31px;height:30px;background:conic-gradient(#d6d2d0 90deg,#fff 90deg 180deg,#d6d2d0 180deg 270deg,#fff 270deg) 0 0/8px 8px;border-top:3px solid #555;border-bottom:4px solid #555"></div>
<div class="a t" style="left:1181px;top:841px;font-size:12px"><span class="m" style="letter-spacing:-0.8px">100 %&nbsp;</span>通常</div>
<div class="a t" style="left:1181px;top:860px;font-size:12px;transform:scaleX(0.8);transform-origin:0 0">レイヤー <span class="m">1</span></div>
<div class="a" style="left:1141px;top:882px;width:36px;height:35px;background:#fff;border:1.5px solid #111"></div>
<div class="a" style="left:1179px;top:882px;width:21px;height:21px;background:#fff;border:1px solid #222"></div>
<svg style="left:1183px;top:885px;" width="13" height="15" viewBox="0 0 13 15"><path d="M0.5 0.5 L8 0.5 L12.5 5 L12.5 14.5 L0.5 14.5Z" fill="#eee" stroke="#333"/><path d="M8 0.5 L8 5 L12.5 5" fill="none" stroke="#333"/></svg>
<div class="a t" style="left:1181px;top:902px;font-size:12px">用紙</div>
<div class="a" style="left:1097px;top:885px;width:168px;height:14px;background:linear-gradient(rgba(230,232,235,0),rgba(215,217,220,0.7))"></div>
</div></div>
<div class="a" style="left:1265px;top:838px;width:12px;height:61px;background:#cfd1d4;border-left:1px solid #b8babd"></div>
<div class="a" style="left:1265px;top:840px;width:12px;height:11px;background:#f8f9fa;border:1px solid #dcdee1;border-radius:2px"></div>
<div class="a" style="left:1268px;top:844px;width:0;height:0;border-left:3.0px solid transparent;border-right:3.0px solid transparent;border-bottom:3px solid #444"></div>
<div class="a" style="left:1265px;top:853px;width:12px;height:24px;background:linear-gradient(90deg,#f6f7f9,#fdfdfe,#eceef1);border:1px solid #dcdee1;border-radius:2px"></div>
<div class="a" style="left:1268px;top:862px;width:6px;height:6px;border-top:1px solid #888;border-bottom:1px solid #888"></div>
<div class="a" style="left:1268px;top:864px;width:6px;height:1px;background:#888"></div>
<div class="a" style="left:1265px;top:888px;width:12px;height:11px;background:#f8f9fa;border:1px solid #dcdee1;border-radius:2px"></div>
<div class="a" style="left:1268px;top:892px;width:0;height:0;border-left:3.0px solid transparent;border-right:3.0px solid transparent;border-top:3px solid #444"></div>
<div class="a" style="left:1092px;top:899px;width:185px;height:22px;background:#f1f4f7;border-top:1px solid #c8cacd"></div>
<div class="a" style="left:1093px;top:900px;width:20px;height:20px;background:linear-gradient(#d4d5d8,#c4c5c8);border:1px solid #b0b2b5"></div>
<svg style="left:1095px;top:902px;" width="16" height="16" viewBox="0 0 16 16"><path d="M1 3 C5 -1 11 5 15 1 M1 8 C5 4 11 10 15 6 M1 13 C5 9 11 15 15 11" fill="none" stroke="#222" stroke-width="1.4"/><path d="M1 4 C5 8 11 2 15 6 M1 9 C5 13 11 7 15 11" fill="none" stroke="#444" stroke-width="1"/></svg>
<svg style="left:1120px;top:902px;" width="15" height="16" viewBox="0 0 15 16"><path d="M0.5 0.5 L13.5 0.5 L13.5 10 L9 15.5 L0.5 15.5Z" fill="#fff" stroke="#333"/><path d="M13.5 10 L9 10 L9 15.5" fill="none" stroke="#333"/></svg>
<svg style="left:1139px;top:902px;" width="16" height="16" viewBox="0 0 16 16"><path d="M0.5 0.5 L13.5 0.5 L13.5 10 L9 15.5 L0.5 15.5Z" fill="#fff" stroke="#333"/><rect x="9" y="10" width="6" height="5" fill="#ddd" stroke="#333"/></svg>
<svg style="left:1158px;top:902px;" width="19" height="16" viewBox="0 0 19 16"><path d="M0.5 2 L6 2 L8 4 L12 4 L12 15.5 L0.5 15.5Z" fill="#999" stroke="#555"/><path d="M6.5 5.5 L17.5 5.5 L17.5 12 L13 15.5 L6.5 15.5Z" fill="#fff" stroke="#333"/></svg>
<svg style="left:1180px;top:901px;" width="15" height="18" viewBox="0 0 15 18"><path d="M7.5 0 L14 4 L7.5 8 L1 4Z" fill="#eee" stroke="#ccc"/><path d="M5 5 L10 5 L10 11 L13 11 L7.5 17 L2 11 L5 11Z" fill="#ccc"/></svg>
<svg style="left:1198px;top:901px;" width="18" height="18" viewBox="0 0 18 18"><path d="M9 0 L17 5 L17 13 L9 18 L1 13 L1 5Z" fill="#eee" stroke="#333"/><path d="M6 3 L12 3 L12 9 L15 9 L9 15 L3 9 L6 9Z" fill="#333"/></svg>
<svg style="left:1218px;top:904px;" width="18" height="11" viewBox="0 0 18 11"><rect x="0.5" y="0.5" width="17" height="10" fill="#666" stroke="#333"/><circle cx="9" cy="5.5" r="3.5" fill="#fff"/></svg>
<svg style="left:1240px;top:901px;" width="16" height="18" viewBox="0 0 16 18"><path d="M2 1 L14 6 L2 11Z" fill="#eee" stroke="#ccc"/><path d="M5 6 L9 6 L9 13 L12 13 L7 18 L2 13 L5 13Z" fill="#ccc"/></svg>
<svg style="left:1260px;top:901px;" width="15" height="18" viewBox="0 0 15 18"><ellipse cx="7.5" cy="3.5" rx="6.5" ry="3" fill="#ddd" stroke="#333"/><path d="M1.5 5 L3 17 L12 17 L13.5 5" fill="#f4f4f4" stroke="#333"/><path d="M5.5 7 L6 15 M9.5 7 L9 15" stroke="#777" stroke-width="0.8"/></svg>
<div class="a" style="left:1092px;top:921px;width:185px;height:1px;background:#b4b5b8"></div>
<div class="a" style="left:1092px;top:922px;width:185px;height:17px;background:linear-gradient(#e6e7ea,#d9dade);border-top:1px solid #b2b3b6;border-bottom:1px solid #b4b5b8"></div>
<div class="a" style="left:1093px;top:924px;width:19px;height:15px;background:linear-gradient(#e2e3e6,#d3d4d8);border:1px solid #b9babd"></div>
<svg style="left:1099px;top:927px;" width="9" height="9" viewBox="0 0 9 9"><path d="M0 1.5 L2.5 4.5 L0 7.5" fill="none" stroke="#9a9a9d" stroke-width="1.4"/><rect x="3.5" y="1" width="4.5" height="1.5" fill="#9a9a9d"/><rect x="3.5" y="4" width="4.5" height="1.5" fill="#9a9a9d"/><rect x="3.5" y="7" width="4.5" height="1.5" fill="#9a9a9d"/></svg>
<div class="a" style="left:1111px;top:924px;width:83px;height:16px;background:linear-gradient(#f7f8fa,#f0f4f7);border:1px solid #b0b1b4;border-bottom:none"></div>
<div class="a" style="left:1118px;top:926px;width:14px;height:14px;border-radius:50%;background:radial-gradient(circle at 40% 35%,#888,#333)"></div>
<div class="a" style="left:1123.5px;top:928px;width:3px;height:3px;border-radius:50%;background:#fff"></div>
<div class="a" style="left:1123.5px;top:932px;width:3px;height:6px;background:#fff"></div>
<div class="a t" style="left:1139px;top:927px;font-size:11px;color:#000;letter-spacing:-1.5px">メモリ情報</div>
<div class="a t" style="left:1095px;top:943px;font-size:12px;letter-spacing:-0.6px;transform:scaleX(0.833);transform-origin:0 0">システム<span class="m">:73%</span></div>
<div class="a t" style="left:1163px;top:943px;font-size:12px;letter-spacing:-0.6px;transform:scaleX(0.777);transform-origin:0 0">アプリケーション<span class="m">:87%</span></div>
<div class="a" style="left:0px;top:0px;width:1px;height:960px;background:#9a9a9c"></div>
</body></html>
